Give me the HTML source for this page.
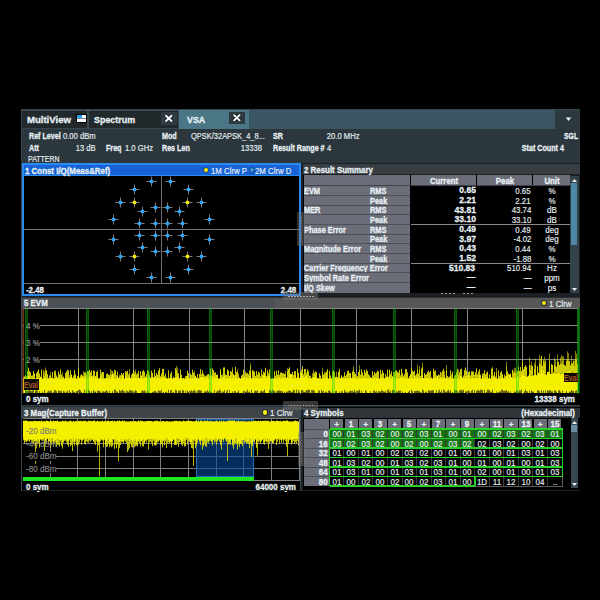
<!DOCTYPE html>
<html><head><meta charset="utf-8"><style>
html,body{margin:0;padding:0;background:#000;width:600px;height:600px;overflow:hidden}
.r{position:absolute}
.t{position:absolute;white-space:pre;font-family:"Liberation Sans", sans-serif;line-height:1;-webkit-text-stroke:0.15px currentColor}
.b{-webkit-text-stroke:0.3px currentColor}
</style></head><body>
<div class="r" style="left:21px;top:109px;width:558.5px;height:381.5px;background:#252c30;"></div><div class="r" style="left:21px;top:109px;width:558.5px;height:20px;background:#37474f;"></div><div class="r" style="left:179px;top:109.5px;width:376px;height:19.5px;background:#3b5663;"></div><div class="r" style="left:179px;top:109.5px;width:70px;height:19.5px;background:#4b7686;"></div><div class="r" style="left:555px;top:109.5px;width:24.5px;height:19.5px;background:#2c393f;"></div><div class="r" style="left:22px;top:111px;width:65.3px;height:16.8px;background:#22292d;"></div><div class="r" style="left:87.3px;top:109px;width:1.7px;height:20px;background:#3a4a52;"></div><div class="r" style="left:89px;top:111px;width:89.3px;height:16.8px;background:#22292d;"></div><div class="t b" style="left:26.9px;transform-origin:0 0;top:115.11px;font-size:9.6px;font-weight:bold;color:#e8f0f4;transform:scaleX(1.0);">MultiView</div><div class="r" style="left:76px;top:114px;width:11px;height:9px;background:#000;"></div><div class="r" style="left:77px;top:115px;width:9px;height:7px;background:#f4f6f8;"></div><div class="r" style="left:77px;top:115px;width:5px;height:3px;background:#2aa0f0;"></div><div class="r" style="left:77px;top:118px;width:9px;height:0.5px;background:#808890;"></div><div class="t b" style="left:94px;transform-origin:0 0;top:115.11px;font-size:9.6px;font-weight:bold;color:#e8f0f4;transform:scaleX(0.93);">Spectrum</div><div class="r" style="left:160.7px;top:112.4px;width:16.3px;height:12.6px;background:#2e3c42;"></div><svg class="r" style="left:0;top:0" width="600" height="600"><path d="M165.5 115.2L172 121.5M172 115.2L165.5 121.5" stroke="#000" stroke-opacity="0.6" stroke-width="3.2"/><path d="M165.5 115.2L172 121.5M172 115.2L165.5 121.5" stroke="#fff" stroke-width="1.9"/></svg><div class="t b" style="left:186.5px;transform-origin:0 0;top:115.11px;font-size:9.6px;font-weight:bold;color:#e8f0f4;transform:scaleX(0.92);">VSA</div><div class="r" style="left:229px;top:112px;width:15.7px;height:11.6px;background:#2c3a40;"></div><svg class="r" style="left:0;top:0" width="600" height="600"><path d="M233.6 114.6L240.1 120.9M240.1 114.6L233.6 120.9" stroke="#000" stroke-opacity="0.6" stroke-width="3.2"/><path d="M233.6 114.6L240.1 120.9M240.1 114.6L233.6 120.9" stroke="#fff" stroke-width="1.9"/></svg><svg class="r" style="left:565px;top:116.5px" width="7" height="5"><path d="M0.8 0.5 L6.2 0.5 L3.5 4 Z" fill="#f4f4f4"/></svg><div class="r" style="left:21px;top:129px;width:558.5px;height:34px;background:#2b373d;"></div><div class="t b" style="left:29.2px;transform-origin:0 0;top:132.09px;font-size:8.3px;font-weight:bold;color:#e8f0f4;transform:scaleX(0.86);">Ref Level</div><div class="t" style="left:63.3px;transform-origin:0 0;top:132.09px;font-size:8.3px;font-weight:normal;color:#e8f0f4;transform:scaleX(0.92);">0.00 dBm</div><div class="t b" style="left:161.7px;transform-origin:0 0;top:132.09px;font-size:8.3px;font-weight:bold;color:#e8f0f4;transform:scaleX(0.86);">Mod</div><div class="t" style="left:190.7px;transform-origin:0 0;top:132.09px;font-size:8.3px;font-weight:normal;color:#e8f0f4;transform:scaleX(0.9);">QPSK/32APSK_4_8...</div><div class="t b" style="left:272.7px;transform-origin:0 0;top:132.09px;font-size:8.3px;font-weight:bold;color:#e8f0f4;transform:scaleX(0.86);">SR</div><div class="t" style="right:240.5px;transform-origin:100% 0;top:132.09px;font-size:8.3px;font-weight:normal;color:#e8f0f4;transform:scaleX(0.92);">20.0 MHz</div><div class="t b" style="right:21.700000000000045px;transform-origin:100% 0;top:132.09px;font-size:8.3px;font-weight:bold;color:#e8f0f4;transform:scaleX(0.82);">SGL</div><div class="t b" style="left:29.2px;transform-origin:0 0;top:144.19px;font-size:8.3px;font-weight:bold;color:#e8f0f4;transform:scaleX(0.86);">Att</div><div class="t" style="right:504.7px;transform-origin:100% 0;top:144.19px;font-size:8.3px;font-weight:normal;color:#e8f0f4;transform:scaleX(0.92);">13 dB</div><div class="t b" style="left:105.75px;transform-origin:0 0;top:144.19px;font-size:8.3px;font-weight:bold;color:#e8f0f4;transform:scaleX(0.86);">Freq</div><div class="t" style="left:125px;transform-origin:0 0;top:144.19px;font-size:8.3px;font-weight:normal;color:#e8f0f4;transform:scaleX(0.92);">1.0 GHz</div><div class="t b" style="left:161.7px;transform-origin:0 0;top:144.19px;font-size:8.3px;font-weight:bold;color:#e8f0f4;transform:scaleX(0.86);">Res Len</div><div class="t" style="right:338.3px;transform-origin:100% 0;top:144.19px;font-size:8.3px;font-weight:normal;color:#e8f0f4;transform:scaleX(0.92);">13338</div><div class="t b" style="left:272.7px;transform-origin:0 0;top:144.19px;font-size:8.3px;font-weight:bold;color:#e8f0f4;transform:scaleX(0.86);">Result Range #</div><div class="t" style="left:326.7px;transform-origin:0 0;top:144.19px;font-size:8.3px;font-weight:normal;color:#e8f0f4;transform:scaleX(0.92);">4</div><div class="t b" style="right:36.299999999999955px;transform-origin:100% 0;top:144.19px;font-size:8.3px;font-weight:bold;color:#e8f0f4;transform:scaleX(0.86);">Stat Count 4</div><div class="t" style="left:28px;transform-origin:0 0;top:155.19px;font-size:8.3px;font-weight:normal;color:#e8f0f4;transform:scaleX(0.84);">PATTERN</div><div class="r" style="left:22px;top:163px;width:279px;height:132.5px;background:#2a8cf0;"></div><div class="r" style="left:23.5px;top:165px;width:275.5px;height:9.5px;background:#1762d6;"></div><div class="r" style="left:23.5px;top:175.5px;width:275.5px;height:118.5px;background:#000;"></div><div class="t b" style="left:24.7px;transform-origin:0 0;top:166.93px;font-size:8.7px;font-weight:bold;color:#e8f0f4;transform:scaleX(0.91);">1 Const I/Q(Meas&amp;Ref)</div><div class="r" style="left:204.3px;top:167.6px;width:4px;height:4px;border-radius:50%;background:#f8f000;box-shadow:0 0 0 0.6px #203060"></div><div class="t" style="left:210.8px;transform-origin:0 0;top:166.93px;font-size:8.7px;font-weight:normal;color:#e8f0f4;transform:scaleX(0.9);">1M Clrw P</div><div class="r" style="left:249.5px;top:167.6px;width:4px;height:4px;border-radius:50%;background:#3aa0d8;box-shadow:0 0 0 0.6px #203060"></div><div class="t" style="left:255.4px;transform-origin:0 0;top:166.93px;font-size:8.7px;font-weight:normal;color:#e8f0f4;transform:scaleX(0.9);">2M Clrw D</div><div class="r" style="left:23.5px;top:229px;width:275.5px;height:1px;background:#707070;"></div><div class="r" style="left:161px;top:175.5px;width:1px;height:108px;background:#707070;"></div><div class="r" style="left:23.5px;top:283px;width:275.5px;height:1px;background:#707070;"></div><div class="t b" style="left:26px;transform-origin:0 0;top:285.99px;font-size:8.3px;font-weight:bold;color:#e8f0f4;transform:scaleX(0.95);">-2.48</div><div class="t b" style="right:303.7px;transform-origin:100% 0;top:285.99px;font-size:8.3px;font-weight:bold;color:#e8f0f4;transform:scaleX(0.95);">2.48</div><svg class="r" style="left:0;top:0" width="600" height="600"><path d="M146.5 181.5H156.5M151.5 176.5V186.5" stroke="#7a7a7a" stroke-width="1"/><path d="M129.5 189.5H139.5M134.5 184.5V194.5" stroke="#7a7a7a" stroke-width="1"/><path d="M115.5 202.5H125.5M120.5 197.5V207.5" stroke="#7a7a7a" stroke-width="1"/><path d="M108.5 219.5H118.5M113.5 214.5V224.5" stroke="#7a7a7a" stroke-width="1"/><path d="M150.5 207.5H160.5M155.5 202.5V212.5" stroke="#7a7a7a" stroke-width="1"/><path d="M137.5 211.5H147.5M142.5 206.5V216.5" stroke="#7a7a7a" stroke-width="1"/><path d="M134.5 223.5H144.5M139.5 218.5V228.5" stroke="#7a7a7a" stroke-width="1"/><path d="M150.5 223.5H160.5M155.5 218.5V228.5" stroke="#7a7a7a" stroke-width="1"/><path d="M129.5 202.5H139.5M134.5 197.5V207.5" stroke="#7a7a7a" stroke-width="1"/><path d="M146.5 277.5H156.5M151.5 272.5V282.5" stroke="#7a7a7a" stroke-width="1"/><path d="M129.5 269.5H139.5M134.5 264.5V274.5" stroke="#7a7a7a" stroke-width="1"/><path d="M115.5 256.5H125.5M120.5 251.5V261.5" stroke="#7a7a7a" stroke-width="1"/><path d="M108.5 239.5H118.5M113.5 234.5V244.5" stroke="#7a7a7a" stroke-width="1"/><path d="M150.5 251.5H160.5M155.5 246.5V256.5" stroke="#7a7a7a" stroke-width="1"/><path d="M137.5 247.5H147.5M142.5 242.5V252.5" stroke="#7a7a7a" stroke-width="1"/><path d="M134.5 235.5H144.5M139.5 230.5V240.5" stroke="#7a7a7a" stroke-width="1"/><path d="M150.5 235.5H160.5M155.5 230.5V240.5" stroke="#7a7a7a" stroke-width="1"/><path d="M129.5 256.5H139.5M134.5 251.5V261.5" stroke="#7a7a7a" stroke-width="1"/><path d="M165.5 181.5H175.5M170.5 176.5V186.5" stroke="#7a7a7a" stroke-width="1"/><path d="M183.5 189.5H193.5M188.5 184.5V194.5" stroke="#7a7a7a" stroke-width="1"/><path d="M196.5 202.5H206.5M201.5 197.5V207.5" stroke="#7a7a7a" stroke-width="1"/><path d="M204.5 219.5H214.5M209.5 214.5V224.5" stroke="#7a7a7a" stroke-width="1"/><path d="M162.5 207.5H172.5M167.5 202.5V212.5" stroke="#7a7a7a" stroke-width="1"/><path d="M174.5 211.5H184.5M179.5 206.5V216.5" stroke="#7a7a7a" stroke-width="1"/><path d="M177.5 223.5H187.5M182.5 218.5V228.5" stroke="#7a7a7a" stroke-width="1"/><path d="M162.5 223.5H172.5M167.5 218.5V228.5" stroke="#7a7a7a" stroke-width="1"/><path d="M182.5 202.5H192.5M187.5 197.5V207.5" stroke="#7a7a7a" stroke-width="1"/><path d="M165.5 277.5H175.5M170.5 272.5V282.5" stroke="#7a7a7a" stroke-width="1"/><path d="M183.5 269.5H193.5M188.5 264.5V274.5" stroke="#7a7a7a" stroke-width="1"/><path d="M196.5 256.5H206.5M201.5 251.5V261.5" stroke="#7a7a7a" stroke-width="1"/><path d="M204.5 239.5H214.5M209.5 234.5V244.5" stroke="#7a7a7a" stroke-width="1"/><path d="M162.5 251.5H172.5M167.5 246.5V256.5" stroke="#7a7a7a" stroke-width="1"/><path d="M174.5 247.5H184.5M179.5 242.5V252.5" stroke="#7a7a7a" stroke-width="1"/><path d="M177.5 235.5H187.5M182.5 230.5V240.5" stroke="#7a7a7a" stroke-width="1"/><path d="M162.5 235.5H172.5M167.5 230.5V240.5" stroke="#7a7a7a" stroke-width="1"/><path d="M182.5 256.5H192.5M187.5 251.5V261.5" stroke="#7a7a7a" stroke-width="1"/><rect x="149.7" y="179.7" width="3.6" height="3.6" rx="1.2" fill="#2aa8ff"/><rect x="132.7" y="187.7" width="3.6" height="3.6" rx="1.2" fill="#2aa8ff"/><rect x="118.7" y="200.7" width="3.6" height="3.6" rx="1.2" fill="#2aa8ff"/><rect x="111.7" y="217.7" width="3.6" height="3.6" rx="1.2" fill="#2aa8ff"/><rect x="153.7" y="205.7" width="3.6" height="3.6" rx="1.2" fill="#2aa8ff"/><rect x="140.7" y="209.7" width="3.6" height="3.6" rx="1.2" fill="#2aa8ff"/><rect x="137.7" y="221.7" width="3.6" height="3.6" rx="1.2" fill="#2aa8ff"/><rect x="153.7" y="221.7" width="3.6" height="3.6" rx="1.2" fill="#2aa8ff"/><rect x="132.7" y="200.7" width="3.6" height="3.6" rx="1.2" fill="#f4ec00"/><rect x="149.7" y="275.7" width="3.6" height="3.6" rx="1.2" fill="#2aa8ff"/><rect x="132.7" y="267.7" width="3.6" height="3.6" rx="1.2" fill="#2aa8ff"/><rect x="118.7" y="254.7" width="3.6" height="3.6" rx="1.2" fill="#2aa8ff"/><rect x="111.7" y="237.7" width="3.6" height="3.6" rx="1.2" fill="#2aa8ff"/><rect x="153.7" y="249.7" width="3.6" height="3.6" rx="1.2" fill="#2aa8ff"/><rect x="140.7" y="245.7" width="3.6" height="3.6" rx="1.2" fill="#2aa8ff"/><rect x="137.7" y="233.7" width="3.6" height="3.6" rx="1.2" fill="#2aa8ff"/><rect x="153.7" y="233.7" width="3.6" height="3.6" rx="1.2" fill="#2aa8ff"/><rect x="132.7" y="254.7" width="3.6" height="3.6" rx="1.2" fill="#f4ec00"/><rect x="168.7" y="179.7" width="3.6" height="3.6" rx="1.2" fill="#2aa8ff"/><rect x="186.7" y="187.7" width="3.6" height="3.6" rx="1.2" fill="#2aa8ff"/><rect x="199.7" y="200.7" width="3.6" height="3.6" rx="1.2" fill="#2aa8ff"/><rect x="207.7" y="217.7" width="3.6" height="3.6" rx="1.2" fill="#2aa8ff"/><rect x="165.7" y="205.7" width="3.6" height="3.6" rx="1.2" fill="#2aa8ff"/><rect x="177.7" y="209.7" width="3.6" height="3.6" rx="1.2" fill="#2aa8ff"/><rect x="180.7" y="221.7" width="3.6" height="3.6" rx="1.2" fill="#2aa8ff"/><rect x="165.7" y="221.7" width="3.6" height="3.6" rx="1.2" fill="#2aa8ff"/><rect x="185.7" y="200.7" width="3.6" height="3.6" rx="1.2" fill="#f4ec00"/><rect x="168.7" y="275.7" width="3.6" height="3.6" rx="1.2" fill="#2aa8ff"/><rect x="186.7" y="267.7" width="3.6" height="3.6" rx="1.2" fill="#2aa8ff"/><rect x="199.7" y="254.7" width="3.6" height="3.6" rx="1.2" fill="#2aa8ff"/><rect x="207.7" y="237.7" width="3.6" height="3.6" rx="1.2" fill="#2aa8ff"/><rect x="165.7" y="249.7" width="3.6" height="3.6" rx="1.2" fill="#2aa8ff"/><rect x="177.7" y="245.7" width="3.6" height="3.6" rx="1.2" fill="#2aa8ff"/><rect x="180.7" y="233.7" width="3.6" height="3.6" rx="1.2" fill="#2aa8ff"/><rect x="165.7" y="233.7" width="3.6" height="3.6" rx="1.2" fill="#2aa8ff"/><rect x="185.7" y="254.7" width="3.6" height="3.6" rx="1.2" fill="#f4ec00"/></svg><div class="r" style="left:301px;top:163px;width:278.5px;height:132.5px;background:#1c2024;"></div><div class="r" style="left:302.5px;top:163.7px;width:277px;height:10.5px;background:#383e42;"></div><div class="t b" style="left:303.8px;transform-origin:0 0;top:165.63px;font-size:8.7px;font-weight:bold;color:#e8f0f4;transform:scaleX(0.91);">2 Result Summary</div><div class="r" style="left:302.5px;top:175px;width:267.5px;height:118px;background:#000;"></div><div class="r" style="left:303.8px;top:175.4px;width:106.2px;height:117.2px;background:#6b6d78;"></div><div class="r" style="left:411px;top:175.4px;width:65px;height:9.7px;background:#6b6d78;"></div><div class="r" style="left:477px;top:175.4px;width:55.4px;height:9.7px;background:#6b6d78;"></div><div class="r" style="left:533px;top:175.4px;width:37px;height:9.7px;background:#6b6d78;"></div><div class="r" style="left:303.8px;top:185px;width:266px;height:1.3px;background:#3e434b;"></div><div class="t b" style="left:443.5px;transform-origin:50% 0;top:176.91px;font-size:8.5px;font-weight:bold;color:#e8f0f4;transform:translateX(-50%) scaleX(0.92);">Current</div><div class="t b" style="left:504.7px;transform-origin:50% 0;top:176.91px;font-size:8.5px;font-weight:bold;color:#e8f0f4;transform:translateX(-50%) scaleX(0.92);">Peak</div><div class="t b" style="left:551.5px;transform-origin:50% 0;top:176.91px;font-size:8.5px;font-weight:bold;color:#e8f0f4;transform:translateX(-50%) scaleX(0.92);">Unit</div><div class="t b" style="left:304.3px;transform-origin:0 0;top:187.01px;font-size:8.5px;font-weight:bold;color:#e8f0f4;transform:scaleX(0.87);">EVM</div><div class="t b" style="left:370px;transform-origin:0 0;top:187.01px;font-size:8.5px;font-weight:bold;color:#e8f0f4;transform:scaleX(0.87);">RMS</div><div class="t b" style="right:124.5px;transform-origin:100% 0;top:186.47px;font-size:9.2px;font-weight:bold;color:#e8f0f4;transform:scaleX(0.93);">0.65</div><div class="t" style="right:69px;transform-origin:100% 0;top:187.01px;font-size:8.5px;font-weight:normal;color:#e8f0f4;transform:scaleX(0.92);">0.65</div><div class="t" style="left:551.5px;transform-origin:50% 0;top:187.01px;font-size:8.5px;font-weight:normal;color:#e8f0f4;transform:translateX(-50%) scaleX(0.94);">%</div><div class="r" style="left:303.8px;top:194.95000000000002px;width:106.2px;height:1px;background:#4c5059;"></div><div class="t b" style="left:304.3px;transform-origin:0 0;top:196.66px;font-size:8.5px;font-weight:bold;color:#e8f0f4;transform:scaleX(0.87);"></div><div class="t b" style="left:370px;transform-origin:0 0;top:196.66px;font-size:8.5px;font-weight:bold;color:#e8f0f4;transform:scaleX(0.87);">Peak</div><div class="t b" style="right:124.5px;transform-origin:100% 0;top:196.12px;font-size:9.2px;font-weight:bold;color:#e8f0f4;transform:scaleX(0.93);">2.21</div><div class="t" style="right:69px;transform-origin:100% 0;top:196.66px;font-size:8.5px;font-weight:normal;color:#e8f0f4;transform:scaleX(0.92);">2.21</div><div class="t" style="left:551.5px;transform-origin:50% 0;top:196.66px;font-size:8.5px;font-weight:normal;color:#e8f0f4;transform:translateX(-50%) scaleX(0.94);">%</div><div class="r" style="left:303.8px;top:204.60000000000002px;width:106.2px;height:1px;background:#4c5059;"></div><div class="t b" style="left:304.3px;transform-origin:0 0;top:206.31px;font-size:8.5px;font-weight:bold;color:#e8f0f4;transform:scaleX(0.87);">MER</div><div class="t b" style="left:370px;transform-origin:0 0;top:206.31px;font-size:8.5px;font-weight:bold;color:#e8f0f4;transform:scaleX(0.87);">RMS</div><div class="t b" style="right:124.5px;transform-origin:100% 0;top:205.77px;font-size:9.2px;font-weight:bold;color:#e8f0f4;transform:scaleX(0.93);">43.81</div><div class="t" style="right:69px;transform-origin:100% 0;top:206.31px;font-size:8.5px;font-weight:normal;color:#e8f0f4;transform:scaleX(0.92);">43.74</div><div class="t" style="left:551.5px;transform-origin:50% 0;top:206.31px;font-size:8.5px;font-weight:normal;color:#e8f0f4;transform:translateX(-50%) scaleX(0.94);">dB</div><div class="r" style="left:303.8px;top:214.25px;width:106.2px;height:1px;background:#4c5059;"></div><div class="t b" style="left:304.3px;transform-origin:0 0;top:215.96px;font-size:8.5px;font-weight:bold;color:#e8f0f4;transform:scaleX(0.87);"></div><div class="t b" style="left:370px;transform-origin:0 0;top:215.96px;font-size:8.5px;font-weight:bold;color:#e8f0f4;transform:scaleX(0.87);">Peak</div><div class="t b" style="right:124.5px;transform-origin:100% 0;top:215.42px;font-size:9.2px;font-weight:bold;color:#e8f0f4;transform:scaleX(0.93);">33.10</div><div class="t" style="right:69px;transform-origin:100% 0;top:215.96px;font-size:8.5px;font-weight:normal;color:#e8f0f4;transform:scaleX(0.92);">33.10</div><div class="t" style="left:551.5px;transform-origin:50% 0;top:215.96px;font-size:8.5px;font-weight:normal;color:#e8f0f4;transform:translateX(-50%) scaleX(0.94);">dB</div><div class="r" style="left:303.8px;top:223.9px;width:106.2px;height:1px;background:#4c5059;"></div><div class="t b" style="left:304.3px;transform-origin:0 0;top:225.61px;font-size:8.5px;font-weight:bold;color:#e8f0f4;transform:scaleX(0.87);">Phase Error</div><div class="t b" style="left:370px;transform-origin:0 0;top:225.61px;font-size:8.5px;font-weight:bold;color:#e8f0f4;transform:scaleX(0.87);">RMS</div><div class="t b" style="right:124.5px;transform-origin:100% 0;top:225.07px;font-size:9.2px;font-weight:bold;color:#e8f0f4;transform:scaleX(0.93);">0.49</div><div class="t" style="right:69px;transform-origin:100% 0;top:225.61px;font-size:8.5px;font-weight:normal;color:#e8f0f4;transform:scaleX(0.92);">0.49</div><div class="t" style="left:551.5px;transform-origin:50% 0;top:225.61px;font-size:8.5px;font-weight:normal;color:#e8f0f4;transform:translateX(-50%) scaleX(0.94);">deg</div><div class="r" style="left:303.8px;top:233.55px;width:106.2px;height:1px;background:#4c5059;"></div><div class="t b" style="left:304.3px;transform-origin:0 0;top:235.26px;font-size:8.5px;font-weight:bold;color:#e8f0f4;transform:scaleX(0.87);"></div><div class="t b" style="left:370px;transform-origin:0 0;top:235.26px;font-size:8.5px;font-weight:bold;color:#e8f0f4;transform:scaleX(0.87);">Peak</div><div class="t b" style="right:124.5px;transform-origin:100% 0;top:234.72px;font-size:9.2px;font-weight:bold;color:#e8f0f4;transform:scaleX(0.93);">3.97</div><div class="t" style="right:69px;transform-origin:100% 0;top:235.26px;font-size:8.5px;font-weight:normal;color:#e8f0f4;transform:scaleX(0.92);">-4.02</div><div class="t" style="left:551.5px;transform-origin:50% 0;top:235.26px;font-size:8.5px;font-weight:normal;color:#e8f0f4;transform:translateX(-50%) scaleX(0.94);">deg</div><div class="r" style="left:303.8px;top:243.20000000000002px;width:106.2px;height:1px;background:#4c5059;"></div><div class="t b" style="left:304.3px;transform-origin:0 0;top:244.91px;font-size:8.5px;font-weight:bold;color:#e8f0f4;transform:scaleX(0.87);">Magnitude Error</div><div class="t b" style="left:370px;transform-origin:0 0;top:244.91px;font-size:8.5px;font-weight:bold;color:#e8f0f4;transform:scaleX(0.87);">RMS</div><div class="t b" style="right:124.5px;transform-origin:100% 0;top:244.37px;font-size:9.2px;font-weight:bold;color:#e8f0f4;transform:scaleX(0.93);">0.43</div><div class="t" style="right:69px;transform-origin:100% 0;top:244.91px;font-size:8.5px;font-weight:normal;color:#e8f0f4;transform:scaleX(0.92);">0.44</div><div class="t" style="left:551.5px;transform-origin:50% 0;top:244.91px;font-size:8.5px;font-weight:normal;color:#e8f0f4;transform:translateX(-50%) scaleX(0.94);">%</div><div class="r" style="left:303.8px;top:252.85000000000002px;width:106.2px;height:1px;background:#4c5059;"></div><div class="t b" style="left:304.3px;transform-origin:0 0;top:254.56px;font-size:8.5px;font-weight:bold;color:#e8f0f4;transform:scaleX(0.87);"></div><div class="t b" style="left:370px;transform-origin:0 0;top:254.56px;font-size:8.5px;font-weight:bold;color:#e8f0f4;transform:scaleX(0.87);">Peak</div><div class="t b" style="right:124.5px;transform-origin:100% 0;top:254.02px;font-size:9.2px;font-weight:bold;color:#e8f0f4;transform:scaleX(0.93);">1.52</div><div class="t" style="right:69px;transform-origin:100% 0;top:254.56px;font-size:8.5px;font-weight:normal;color:#e8f0f4;transform:scaleX(0.92);">-1.88</div><div class="t" style="left:551.5px;transform-origin:50% 0;top:254.56px;font-size:8.5px;font-weight:normal;color:#e8f0f4;transform:translateX(-50%) scaleX(0.94);">%</div><div class="r" style="left:303.8px;top:262.5px;width:106.2px;height:1px;background:#4c5059;"></div><div class="t b" style="left:304.3px;transform-origin:0 0;top:264.21px;font-size:8.5px;font-weight:bold;color:#e8f0f4;transform:scaleX(0.87);">Carrier Frequency Error</div><div class="t b" style="left:370px;transform-origin:0 0;top:264.21px;font-size:8.5px;font-weight:bold;color:#e8f0f4;transform:scaleX(0.87);"></div><div class="t b" style="right:124.5px;transform-origin:100% 0;top:263.67px;font-size:9.2px;font-weight:bold;color:#e8f0f4;transform:scaleX(0.93);">510.83</div><div class="t" style="right:69px;transform-origin:100% 0;top:264.21px;font-size:8.5px;font-weight:normal;color:#e8f0f4;transform:scaleX(0.92);">510.94</div><div class="t" style="left:551.5px;transform-origin:50% 0;top:264.21px;font-size:8.5px;font-weight:normal;color:#e8f0f4;transform:translateX(-50%) scaleX(0.94);">Hz</div><div class="r" style="left:303.8px;top:272.15000000000003px;width:106.2px;height:1px;background:#4c5059;"></div><div class="t b" style="left:304.3px;transform-origin:0 0;top:273.86px;font-size:8.5px;font-weight:bold;color:#e8f0f4;transform:scaleX(0.87);">Symbol Rate Error</div><div class="t b" style="left:370px;transform-origin:0 0;top:273.86px;font-size:8.5px;font-weight:bold;color:#e8f0f4;transform:scaleX(0.87);"></div><div class="t b" style="right:124.5px;transform-origin:100% 0;top:273.32px;font-size:9.2px;font-weight:bold;color:#e8f0f4;transform:scaleX(0.93);">&#8212;</div><div class="t" style="right:69px;transform-origin:100% 0;top:273.86px;font-size:8.5px;font-weight:normal;color:#e8f0f4;transform:scaleX(0.92);">&#8212;</div><div class="t" style="left:551.5px;transform-origin:50% 0;top:273.86px;font-size:8.5px;font-weight:normal;color:#e8f0f4;transform:translateX(-50%) scaleX(0.94);">ppm</div><div class="r" style="left:303.8px;top:281.8px;width:106.2px;height:1px;background:#4c5059;"></div><div class="t b" style="left:304.3px;transform-origin:0 0;top:283.51px;font-size:8.5px;font-weight:bold;color:#e8f0f4;transform:scaleX(0.87);">I/Q Skew</div><div class="t b" style="left:370px;transform-origin:0 0;top:283.51px;font-size:8.5px;font-weight:bold;color:#e8f0f4;transform:scaleX(0.87);"></div><div class="t b" style="right:124.5px;transform-origin:100% 0;top:282.97px;font-size:9.2px;font-weight:bold;color:#e8f0f4;transform:scaleX(0.93);">&#8212;</div><div class="t" style="right:69px;transform-origin:100% 0;top:283.51px;font-size:8.5px;font-weight:normal;color:#e8f0f4;transform:scaleX(0.92);">&#8212;</div><div class="t" style="left:551.5px;transform-origin:50% 0;top:283.51px;font-size:8.5px;font-weight:normal;color:#e8f0f4;transform:translateX(-50%) scaleX(0.94);">ps</div><div class="r" style="left:411px;top:223.5px;width:159px;height:1px;background:#8a8a8a;"></div><div class="r" style="left:411px;top:262.5px;width:159px;height:1px;background:#8a8a8a;"></div><div class="r" style="left:441px;top:292.5px;width:2px;height:1px;background:#9a9a9a;"></div><div class="r" style="left:445px;top:292.5px;width:2px;height:1px;background:#9a9a9a;"></div><div class="r" style="left:449px;top:292.5px;width:2px;height:1px;background:#9a9a9a;"></div><div class="r" style="left:453px;top:292.5px;width:2px;height:1px;background:#9a9a9a;"></div><div class="r" style="left:463px;top:292.5px;width:2px;height:1px;background:#9a9a9a;"></div><div class="r" style="left:467px;top:292.5px;width:2px;height:1px;background:#9a9a9a;"></div><div class="r" style="left:471px;top:292.5px;width:2px;height:1px;background:#9a9a9a;"></div><div class="r" style="left:570px;top:176px;width:8.5px;height:117px;background:#33424a;"></div><div class="r" style="left:571.3px;top:182.5px;width:5.6px;height:62.5px;background:#4f87a6;"></div><svg class="r" style="left:571px;top:177.5px" width="7" height="5"><path d="M1 4 L6 4 L3.5 1 Z" fill="#f0f0f0"/></svg><svg class="r" style="left:571px;top:286.5px" width="7" height="5"><path d="M1 1 L6 1 L3.5 4 Z" fill="#f0f0f0"/></svg><div class="r" style="left:21px;top:295.5px;width:558.5px;height:2px;background:#1a1f22;"></div><div class="r" style="left:22px;top:297.5px;width:557.5px;height:108px;background:#000;"></div><div class="r" style="left:22px;top:297.5px;width:557.5px;height:10.8px;background:#575757;"></div><div class="r" style="left:22px;top:297.5px;width:253px;height:10.8px;background:#4b5155;"></div><div class="r" style="left:22px;top:297.3px;width:557.5px;height:0.8px;background:#2a3034;"></div><div class="t b" style="left:24px;transform-origin:0 0;top:299.33px;font-size:8.7px;font-weight:bold;color:#e8f0f4;transform:scaleX(0.91);">5 EVM</div><div class="r" style="left:541.5px;top:300.7px;width:4.5px;height:4.5px;border-radius:50%;background:#f8f000;box-shadow:0 0 0 0.8px #182040"></div><div class="t" style="right:28.700000000000045px;transform-origin:100% 0;top:299.63px;font-size:8.7px;font-weight:normal;color:#e8f0f4;transform:scaleX(0.92);">1 Clrw</div><div class="r" style="left:21px;top:405.3px;width:558.5px;height:1.2px;background:#37474f;"></div><div class="r" style="left:21px;top:109px;width:1.2px;height:381.5px;background:#37474f;"></div><svg class="r" style="left:0;top:0" width="600" height="600" shape-rendering="crispEdges"><path d="M22.5 308.5H578.5" stroke="#858585" stroke-width="1"/><path d="M22.5 325.5H578.5" stroke="#858585" stroke-width="1"/><path d="M22.5 342.5H578.5" stroke="#858585" stroke-width="1"/><path d="M22.5 359.5H578.5" stroke="#858585" stroke-width="1"/><path d="M78.5 308.3V393.5" stroke="#858585" stroke-width="1"/><path d="M133.5 308.3V393.5" stroke="#858585" stroke-width="1"/><path d="M189.5 308.3V393.5" stroke="#858585" stroke-width="1"/><path d="M244.5 308.3V393.5" stroke="#858585" stroke-width="1"/><path d="M300.5 308.3V393.5" stroke="#858585" stroke-width="1"/><path d="M356.5 308.3V393.5" stroke="#858585" stroke-width="1"/><path d="M411.5 308.3V393.5" stroke="#858585" stroke-width="1"/><path d="M467.5 308.3V393.5" stroke="#858585" stroke-width="1"/><path d="M522.5 308.3V393.5" stroke="#858585" stroke-width="1"/></svg><div class="r" style="left:23.5px;top:321.5px;width:16px;height:8px;background:#000;"></div><div class="t" style="left:26px;transform-origin:0 0;top:321.83px;font-size:8.7px;font-weight:normal;color:#9c9c9c;transform:scaleX(0.92);">4 %</div><div class="r" style="left:23.5px;top:338.5px;width:16px;height:8px;background:#000;"></div><div class="t" style="left:26px;transform-origin:0 0;top:338.83px;font-size:8.7px;font-weight:normal;color:#9c9c9c;transform:scaleX(0.92);">3 %</div><div class="r" style="left:23.5px;top:355.5px;width:16px;height:8px;background:#000;"></div><div class="t" style="left:26px;transform-origin:0 0;top:355.83px;font-size:8.7px;font-weight:normal;color:#9c9c9c;transform:scaleX(0.92);">2 %</div><svg class="r" style="left:0;top:0" width="600" height="600"><path d="M23.5 393V378.9M24.5 393V378.4M25.5 393V377.2M26.5 393V379.0M27.5 393V375.8M28.5 393V375.7M29.5 393V378.8M30.5 393V378.6M31.5 393V378.7M32.5 393V379.3M33.5 393V377.7M34.5 393V379.0M35.5 393V379.3M36.5 393V377.7M37.5 393V378.0M38.5 393V377.4M39.5 393V378.5M40.5 393V376.7M41.5 393V376.3M42.5 393V379.0M43.5 393V378.7M44.5 393V377.9M45.5 393V378.4M46.5 393V378.3M47.5 393V378.3M48.5 393V378.2M49.5 393V378.7M50.5 393V378.4M51.5 393V377.6M52.5 393V377.4M53.5 393V379.2M54.5 393V378.8M55.5 393V377.8M56.5 393V378.1M57.5 393V379.5M58.5 393V379.5M59.5 393V378.5M60.5 393V378.2M61.5 393V378.6M62.5 393V379.4M63.5 393V378.3M64.5 393V379.3M65.5 393V377.3M66.5 393V376.9M67.5 393V378.7M68.5 393V378.1M69.5 393V379.1M70.5 393V376.9M71.5 393V374.6M72.5 393V377.8M73.5 393V378.5M74.5 393V378.3M75.5 393V376.3M76.5 393V379.1M77.5 393V378.8M78.5 393V375.9M79.5 393V377.7M80.5 393V378.1M81.5 393V376.7M82.5 393V375.6M83.5 393V378.4M84.5 393V377.8M85.5 393V375.4M86.5 393V377.7M87.5 393V379.4M88.5 393V377.2M89.5 393V375.2M90.5 393V377.1M91.5 393V375.6M92.5 393V379.4M93.5 393V375.9M94.5 393V378.2M95.5 393V376.1M96.5 393V378.1M97.5 393V376.1M98.5 393V379.2M99.5 393V378.1M100.5 393V375.2M101.5 393V378.9M102.5 393V378.5M103.5 393V378.5M104.5 393V378.7M105.5 393V378.0M106.5 393V379.2M107.5 393V378.9M108.5 393V378.4M109.5 393V376.7M110.5 393V379.2M111.5 393V378.1M112.5 393V373.8M113.5 393V376.0M114.5 393V377.4M115.5 393V378.6M116.5 393V377.4M117.5 393V375.5M118.5 393V377.7M119.5 393V379.4M120.5 393V378.3M121.5 393V378.2M122.5 393V376.0M123.5 393V375.9M124.5 393V379.2M125.5 393V376.3M126.5 393V377.0M127.5 393V377.5M128.5 393V379.3M129.5 393V376.2M130.5 393V377.9M131.5 393V378.6M132.5 393V377.9M133.5 393V373.8M134.5 393V378.1M135.5 393V376.9M136.5 393V379.1M137.5 393V379.0M138.5 393V378.0M139.5 393V378.0M140.5 393V378.2M141.5 393V375.5M142.5 393V378.4M143.5 393V377.8M144.5 393V377.4M145.5 393V378.1M146.5 393V376.4M147.5 393V376.6M148.5 393V378.4M149.5 393V376.8M150.5 393V379.4M151.5 393V379.3M152.5 393V378.0M153.5 393V379.2M154.5 393V376.5M155.5 393V379.2M156.5 393V379.4M157.5 393V377.1M158.5 393V379.2M159.5 393V377.1M160.5 393V379.2M161.5 393V378.8M162.5 393V376.7M163.5 393V376.9M164.5 393V377.3M165.5 393V377.7M166.5 393V378.9M167.5 393V378.9M168.5 393V378.6M169.5 393V378.0M170.5 393V377.9M171.5 393V379.4M172.5 393V378.8M173.5 393V379.5M174.5 393V377.8M175.5 393V376.5M176.5 393V376.8M177.5 393V376.0M178.5 393V378.4M179.5 393V378.4M180.5 393V376.1M181.5 393V377.4M182.5 393V378.7M183.5 393V377.9M184.5 393V379.5M185.5 393V378.4M186.5 393V379.1M187.5 393V375.3M188.5 393V377.6M189.5 393V377.9M190.5 393V378.8M191.5 393V378.5M192.5 393V378.3M193.5 393V379.2M194.5 393V379.2M195.5 393V375.8M196.5 393V377.7M197.5 393V379.5M198.5 393V378.4M199.5 393V378.9M200.5 393V376.4M201.5 393V376.7M202.5 393V378.0M203.5 393V376.6M204.5 393V379.1M205.5 393V376.4M206.5 393V378.7M207.5 393V376.2M208.5 393V378.7M209.5 393V377.0M210.5 393V375.2M211.5 393V378.4M212.5 393V376.0M213.5 393V378.8M214.5 393V375.8M215.5 393V376.8M216.5 393V374.9M217.5 393V379.0M218.5 393V378.9M219.5 393V378.7M220.5 393V371.9M221.5 393V379.5M222.5 393V378.9M223.5 393V376.2M224.5 393V375.1M225.5 393V378.9M226.5 393V379.2M227.5 393V377.3M228.5 393V379.1M229.5 393V379.4M230.5 393V374.8M231.5 393V378.8M232.5 393V377.9M233.5 393V374.1M234.5 393V378.6M235.5 393V374.5M236.5 393V379.3M237.5 393V378.6M238.5 393V377.8M239.5 393V377.7M240.5 393V378.9M241.5 393V377.8M242.5 393V379.4M243.5 393V376.8M244.5 393V378.0M245.5 393V378.7M246.5 393V376.8M247.5 393V377.3M248.5 393V377.6M249.5 393V375.6M250.5 393V374.0M251.5 393V378.5M252.5 393V378.5M253.5 393V377.9M254.5 393V377.7M255.5 393V379.1M256.5 393V377.4M257.5 393V377.5M258.5 393V379.4M259.5 393V378.6M260.5 393V379.1M261.5 393V378.0M262.5 393V378.5M263.5 393V374.6M264.5 393V373.9M265.5 393V375.9M266.5 393V377.6M267.5 393V376.4M268.5 393V375.8M269.5 393V374.5M270.5 393V378.8M271.5 393V379.1M272.5 393V378.4M273.5 393V378.8M274.5 393V379.4M275.5 393V378.9M276.5 393V378.3M277.5 393V379.1M278.5 393V377.3M279.5 393V376.8M280.5 393V378.8M281.5 393V378.2M282.5 393V378.2M283.5 393V376.5M284.5 393V379.1M285.5 393V378.5M286.5 393V379.3M287.5 393V376.4M288.5 393V377.7M289.5 393V374.9M290.5 393V373.8M291.5 393V374.0M292.5 393V379.2M293.5 393V377.6M294.5 393V378.7M295.5 393V374.6M296.5 393V379.4M297.5 393V376.8M298.5 393V375.1M299.5 393V378.1M300.5 393V377.9M301.5 393V374.0M302.5 393V375.3M303.5 393V377.1M304.5 393V376.6M305.5 393V375.4M306.5 393V374.6M307.5 393V377.8M308.5 393V377.9M309.5 393V378.9M310.5 393V378.7M311.5 393V378.3M312.5 393V379.3M313.5 393V376.8M314.5 393V376.7M315.5 393V374.6M316.5 393V377.7M317.5 393V379.4M318.5 393V378.7M319.5 393V378.6M320.5 393V378.4M321.5 393V379.3M322.5 393V378.8M323.5 393V379.4M324.5 393V377.0M325.5 393V379.5M326.5 393V376.1M327.5 393V377.8M328.5 393V379.2M329.5 393V377.8M330.5 393V379.3M331.5 393V378.7M332.5 393V378.1M333.5 393V377.0M334.5 393V379.2M335.5 393V379.0M336.5 393V378.1M337.5 393V378.8M338.5 393V378.5M339.5 393V376.8M340.5 393V378.3M341.5 393V375.4M342.5 393V377.7M343.5 393V378.3M344.5 393V378.6M345.5 393V378.3M346.5 393V378.2M347.5 393V377.8M348.5 393V379.3M349.5 393V377.7M350.5 393V377.0M351.5 393V378.0M352.5 393V379.1M353.5 393V378.0M354.5 393V379.5M355.5 393V377.5M356.5 393V379.4M357.5 393V378.4M358.5 393V379.5M359.5 393V378.1M360.5 393V377.7M361.5 393V377.4M362.5 393V378.0M363.5 393V379.4M364.5 393V376.3M365.5 393V378.4M366.5 393V377.4M367.5 393V378.8M368.5 393V377.8M369.5 393V378.2M370.5 393V379.3M371.5 393V377.8M372.5 393V378.2M373.5 393V378.5M374.5 393V376.5M375.5 393V378.6M376.5 393V377.1M377.5 393V377.5M378.5 393V378.2M379.5 393V379.0M380.5 393V376.1M381.5 393V378.3M382.5 393V376.6M383.5 393V377.3M384.5 393V378.4M385.5 393V378.2M386.5 393V376.6M387.5 393V376.8M388.5 393V378.8M389.5 393V376.1M390.5 393V378.6M391.5 393V378.7M392.5 393V376.3M393.5 393V379.0M394.5 393V378.9M395.5 393V379.4M396.5 393V377.9M397.5 393V379.2M398.5 393V378.4M399.5 393V377.5M400.5 393V379.0M401.5 393V376.6M402.5 393V376.6M403.5 393V379.4M404.5 393V379.4M405.5 393V377.4M406.5 393V377.0M407.5 393V379.2M408.5 393V378.3M409.5 393V378.6M410.5 393V378.1M411.5 393V376.3M412.5 393V377.3M413.5 393V378.5M414.5 393V375.4M415.5 393V377.9M416.5 393V378.9M417.5 393V376.9M418.5 393V379.4M419.5 393V378.4M420.5 393V377.7M421.5 393V377.4M422.5 393V374.9M423.5 393V378.1M424.5 393V378.1M425.5 393V379.3M426.5 393V378.0M427.5 393V377.4M428.5 393V378.0M429.5 393V378.7M430.5 393V377.8M431.5 393V378.8M432.5 393V379.3M433.5 393V377.0M434.5 393V377.5M435.5 393V376.8M436.5 393V377.6M437.5 393V375.8M438.5 393V378.6M439.5 393V378.9M440.5 393V376.7M441.5 393V378.8M442.5 393V379.2M443.5 393V377.3M444.5 393V379.3M445.5 393V379.2M446.5 393V378.3M447.5 393V379.2M448.5 393V379.2M449.5 393V378.5M450.5 393V375.3M451.5 393V379.4M452.5 393V373.8M453.5 393V379.3M454.5 393V378.2M455.5 393V377.4M456.5 393V378.4M457.5 393V377.6M458.5 393V378.4M459.5 393V378.3M460.5 393V375.6M461.5 393V375.4M462.5 393V377.5M463.5 393V378.9M464.5 393V377.8M465.5 393V375.5M466.5 393V378.4M467.5 393V377.6M468.5 393V375.0M469.5 393V378.0M470.5 393V378.8M471.5 393V378.9M472.5 393V377.1M473.5 393V377.5M474.5 393V377.7M475.5 393V377.7M476.5 393V377.3M477.5 393V377.1M478.5 393V377.6M479.5 393V375.1M480.5 393V379.2M481.5 393V379.1M482.5 393V375.5M483.5 393V379.1M484.5 393V378.7M485.5 393V376.8M486.5 393V378.3M487.5 393V376.3M488.5 393V378.6M489.5 393V377.9M490.5 393V379.4M491.5 393V376.0M492.5 393V377.1M493.5 393V379.3M494.5 393V374.3M495.5 393V379.5M496.5 393V378.4M497.5 393V379.3M498.5 393V378.9M499.5 393V378.6M500.5 393V378.7M501.5 393V377.3M502.5 393V376.0M503.5 393V378.3M504.5 393V379.1M505.5 393V378.9M506.5 393V375.2M507.5 393V374.8M508.5 393V377.5M509.5 393V374.5M510.5 393V373.7M511.5 393V377.2M512.5 393V377.5M513.5 393V378.0M514.5 393V378.2M515.5 393V376.8M516.5 393V377.2M517.5 393V375.9M518.5 393V376.1M519.5 393V377.3M520.5 393V376.7M521.5 393V374.9M522.5 393V373.5M523.5 393V376.0M524.5 393V375.1M525.5 393V375.6M526.5 393V376.5M527.5 393V376.5M528.5 393V375.6M529.5 393V373.6M530.5 393V376.0M531.5 393V375.7M532.5 393V375.3M533.5 393V375.4M534.5 393V374.5M535.5 393V373.6M536.5 393V375.2M537.5 393V373.4M538.5 393V372.7M539.5 393V373.1M540.5 393V373.2M541.5 393V369.0M542.5 393V372.3M543.5 393V369.7M544.5 393V373.4M545.5 393V374.2M546.5 393V374.7M547.5 393V372.0M548.5 393V371.7M549.5 393V371.6M550.5 393V374.0M551.5 393V373.5M552.5 393V373.5M553.5 393V372.6M554.5 393V372.7M555.5 393V374.0M556.5 393V373.8M557.5 393V373.1M558.5 393V372.1M559.5 393V372.8M560.5 393V374.3M561.5 393V373.7M562.5 393V373.5M563.5 393V373.1M564.5 393V373.0M565.5 393V374.6M566.5 393V373.4M567.5 393V371.1M568.5 393V374.3M569.5 393V371.0M570.5 393V374.6M571.5 393V372.6M572.5 393V372.5M573.5 393V373.2M574.5 393V373.4M575.5 393V372.1M576.5 393V373.4M577.5 393V374.4" stroke="#f4f000" stroke-width="1"/><path d="M23.5 378.9V376.9M24.5 378.4V376.4M25.5 377.2V375.0M26.5 379.0V376.5M27.5 375.8V371.3M28.5 375.7V367.7M29.5 378.8V371.2M30.5 378.6V372.3M31.5 378.7V375.7M32.5 379.3V375.4M33.5 377.7V371.0M34.5 379.0V373.5M36.5 377.7V373.1M37.5 378.0V371.5M38.5 377.4V369.4M39.5 378.5V373.6M41.5 376.3V369.5M43.5 378.7V372.2M44.5 377.9V375.5M45.5 378.4V370.3M46.5 378.3V370.2M47.5 378.3V374.1M49.5 378.7V375.5M50.5 378.4V374.9M52.5 377.4V372.1M54.5 378.8V370.8M55.5 377.8V371.5M56.5 378.1V375.4M57.5 379.5V377.2M58.5 379.5V371.4M59.5 378.5V374.3M60.5 378.2V369.2M61.5 378.6V374.5M62.5 379.4V376.7M63.5 378.3V376.6M65.5 377.3V373.0M66.5 376.9V371.4M67.5 378.7V369.9M68.5 378.1V370.5M69.5 379.1V377.4M70.5 376.9V370.2M73.5 378.5V375.5M74.5 378.3V370.1M75.5 376.3V374.2M77.5 378.8V375.9M78.5 375.9V368.4M80.5 378.1V375.4M81.5 376.7V374.1M83.5 378.4V375.9M84.5 377.8V372.3M85.5 375.4V372.3M86.5 377.7V374.4M87.5 379.4V371.0M88.5 377.2V371.3M89.5 375.2V369.7M90.5 377.1V372.3M91.5 375.6V370.5M92.5 379.4V375.5M93.5 375.9V370.2M94.5 378.2V370.9M96.5 378.1V372.0M97.5 376.1V370.6M100.5 375.2V369.5M101.5 378.9V374.0M102.5 378.5V372.0M103.5 378.5V372.0M106.5 379.2V374.0M107.5 378.9V373.5M108.5 378.4V374.5M109.5 376.7V375.1M110.5 379.2V373.8M111.5 378.1V374.6M112.5 373.8V371.3M113.5 376.0V373.4M114.5 377.4V370.6M115.5 378.6V370.1M116.5 377.4V375.2M117.5 375.5V371.5M119.5 379.4V376.1M120.5 378.3V375.3M121.5 378.2V373.0M122.5 376.0V374.4M123.5 375.9V373.0M125.5 376.3V371.1M126.5 377.0V371.7M127.5 377.5V370.7M128.5 379.3V375.2M129.5 376.2V373.5M131.5 378.6V374.9M132.5 377.9V373.1M133.5 373.8V370.4M134.5 378.1V373.9M135.5 376.9V371.6M136.5 379.1V374.6M137.5 379.0V373.5M138.5 378.0V371.1M140.5 378.2V371.3M142.5 378.4V371.4M143.5 377.8V370.0M144.5 377.4V371.6M145.5 378.1V376.4M146.5 376.4V374.1M147.5 376.6V370.0M148.5 378.4V370.9M149.5 376.8V374.8M150.5 379.4V377.4M151.5 379.3V370.5M152.5 378.0V372.9M153.5 379.2V377.1M154.5 376.5V369.4M155.5 379.2V375.7M156.5 379.4V372.8M157.5 377.1V374.7M158.5 379.2V370.4M159.5 377.1V368.3M160.5 379.2V376.2M161.5 378.8V373.4M162.5 376.7V369.0M163.5 376.9V368.7M164.5 377.3V375.7M165.5 377.7V373.6M166.5 378.9V377.4M168.5 378.6V370.3M170.5 377.9V373.7M171.5 379.4V371.6M173.5 379.5V376.6M175.5 376.5V368.1M176.5 376.8V369.9M177.5 376.0V372.3M178.5 378.4V373.3M180.5 376.1V369.6M181.5 377.4V374.7M185.5 378.4V376.2M186.5 379.1V375.8M187.5 375.3V370.7M188.5 377.6V373.2M190.5 378.8V373.6M191.5 378.5V375.1M192.5 378.3V369.7M193.5 379.2V372.4M194.5 379.2V373.3M197.5 379.5V374.1M199.5 378.9V374.0M200.5 376.4V369.0M201.5 376.7V374.3M202.5 378.0V371.2M203.5 376.6V373.4M204.5 379.1V375.3M206.5 378.7V375.4M207.5 376.2V374.5M208.5 378.7V374.0M209.5 377.0V375.3M210.5 375.2V368.5M211.5 378.4V375.4M212.5 376.0V368.4M213.5 378.8V370.2M214.5 375.8V372.7M215.5 376.8V372.3M217.5 379.0V374.6M220.5 371.9V369.0M221.5 379.5V375.1M222.5 378.9V376.2M223.5 376.2V367.5M224.5 375.1V367.4M225.5 378.9V374.6M226.5 379.2V375.0M227.5 377.3V370.0M228.5 379.1V370.7M229.5 379.4V375.9M230.5 374.8V371.3M231.5 378.8V371.6M232.5 377.9V369.3M234.5 378.6V375.3M235.5 374.5V366.9M236.5 379.3V372.0M237.5 378.6V371.2M238.5 377.8V374.4M241.5 377.8V375.6M242.5 379.4V374.5M243.5 376.8V369.7M244.5 378.0V375.6M245.5 378.7V371.7M246.5 376.8V373.4M247.5 377.3V372.9M248.5 377.6V374.3M249.5 375.6V370.6M250.5 374.0V365.6M252.5 378.5V370.1M253.5 377.9V370.6M254.5 377.7V371.7M255.5 379.1V376.0M256.5 377.4V371.0M257.5 377.5V374.7M258.5 379.4V371.9M259.5 378.6V372.9M260.5 379.1V376.4M261.5 378.0V369.3M262.5 378.5V374.4M263.5 374.6V371.6M264.5 373.9V372.4M265.5 375.9V367.8M266.5 377.6V376.0M267.5 376.4V370.3M268.5 375.8V373.2M269.5 374.5V369.4M274.5 379.4V371.1M275.5 378.9V375.7M276.5 378.3V370.6M277.5 379.1V374.7M278.5 377.3V370.4M279.5 376.8V375.0M280.5 378.8V372.8M281.5 378.2V372.3M282.5 378.2V373.3M283.5 376.5V373.2M284.5 379.1V374.1M285.5 378.5V373.7M286.5 379.3V377.5M287.5 376.4V371.1M288.5 377.7V369.1M289.5 374.9V367.3M292.5 379.2V371.8M293.5 377.6V374.9M294.5 378.7V371.1M295.5 374.6V371.1M296.5 379.4V377.7M297.5 376.8V368.6M298.5 375.1V372.8M300.5 377.9V372.1M301.5 374.0V369.6M302.5 375.3V366.3M303.5 377.1V374.3M304.5 376.6V369.0M305.5 375.4V369.0M306.5 374.6V372.9M307.5 377.8V369.5M308.5 377.9V371.5M309.5 378.9V375.7M310.5 378.7V375.6M312.5 379.3V376.7M313.5 376.8V373.4M314.5 376.7V372.6M315.5 374.6V371.3M316.5 377.7V372.2M317.5 379.4V377.8M319.5 378.6V373.3M320.5 378.4V375.5M322.5 378.8V372.0M323.5 379.4V374.5M324.5 377.0V373.8M325.5 379.5V372.7M326.5 376.1V371.3M327.5 377.8V369.1M329.5 377.8V370.7M330.5 379.3V375.4M332.5 378.1V371.4M333.5 377.0V370.3M334.5 379.2V372.2M335.5 379.0V376.9M336.5 378.1V376.4M337.5 378.8V377.0M338.5 378.5V371.8M339.5 376.8V369.2M343.5 378.3V376.6M344.5 378.6V372.3M345.5 378.3V376.0M346.5 378.2V374.3M347.5 377.8V371.0M348.5 379.3V370.5M349.5 377.7V373.1M350.5 377.0V372.9M352.5 379.1V371.5M353.5 378.0V369.2M354.5 379.5V372.0M355.5 377.5V374.0M356.5 379.4V376.3M357.5 378.4V376.3M358.5 379.5V372.1M359.5 378.1V369.9M360.5 377.7V374.7M361.5 377.4V369.3M362.5 378.0V372.5M363.5 379.4V375.5M364.5 376.3V369.9M365.5 378.4V372.5M366.5 377.4V369.3M367.5 378.8V371.0M368.5 377.8V374.4M369.5 378.2V375.3M370.5 379.3V377.1M372.5 378.2V371.2M373.5 378.5V375.4M374.5 376.5V372.0M375.5 378.6V373.6M376.5 377.1V372.5M377.5 377.5V370.4M378.5 378.2V371.3M380.5 376.1V369.8M381.5 378.3V373.7M382.5 376.6V370.4M383.5 377.3V372.8M385.5 378.2V373.8M387.5 376.8V369.5M388.5 378.8V376.6M389.5 376.1V369.8M390.5 378.6V374.0M391.5 378.7V371.5M393.5 379.0V374.5M394.5 378.9V372.2M395.5 379.4V370.8M396.5 377.9V370.4M397.5 379.2V371.7M398.5 378.4V372.7M399.5 377.5V369.9M400.5 379.0V375.3M401.5 376.6V368.7M402.5 376.6V373.1M403.5 379.4V375.8M404.5 379.4V374.3M405.5 377.4V368.9M406.5 377.0V369.3M407.5 379.2V373.0M409.5 378.6V376.0M410.5 378.1V374.0M411.5 376.3V368.1M412.5 377.3V370.8M413.5 378.5V371.8M414.5 375.4V370.6M415.5 377.9V375.3M416.5 378.9V373.9M417.5 376.9V368.9M418.5 379.4V373.6M419.5 378.4V369.6M420.5 377.7V376.0M421.5 377.4V368.5M422.5 374.9V366.6M424.5 378.1V373.0M425.5 379.3V374.6M426.5 378.0V374.3M427.5 377.4V372.1M428.5 378.0V370.6M429.5 378.7V372.5M430.5 377.8V370.9M431.5 378.8V377.3M433.5 377.0V368.7M434.5 377.5V371.3M435.5 376.8V370.3M436.5 377.6V375.3M438.5 378.6V374.4M439.5 378.9V375.1M440.5 376.7V372.0M441.5 378.8V377.0M442.5 379.2V370.8M443.5 377.3V368.8M444.5 379.3V374.7M445.5 379.2V377.7M446.5 378.3V369.5M447.5 379.2V375.9M448.5 379.2V377.3M449.5 378.5V376.4M450.5 375.3V370.3M451.5 379.4V377.8M452.5 373.8V371.7M454.5 378.2V376.2M455.5 377.4V374.8M456.5 378.4V372.1M457.5 377.6V369.0M458.5 378.4V374.7M459.5 378.3V372.3M460.5 375.6V369.5M461.5 375.4V368.7M463.5 378.9V375.4M464.5 377.8V370.2M465.5 375.5V367.5M466.5 378.4V370.5M467.5 377.6V375.4M468.5 375.0V372.0M469.5 378.0V371.5M470.5 378.8V375.4M471.5 378.9V371.3M472.5 377.1V371.3M473.5 377.5V371.6M474.5 377.7V374.9M475.5 377.7V372.3M476.5 377.3V368.4M477.5 377.1V374.4M478.5 377.6V372.2M479.5 375.1V369.3M480.5 379.2V374.5M482.5 375.5V373.7M483.5 379.1V373.4M484.5 378.7V370.1M485.5 376.8V374.4M486.5 378.3V372.6M487.5 376.3V371.5M489.5 377.9V374.5M491.5 376.0V368.6M492.5 377.1V368.2M493.5 379.3V375.6M494.5 374.3V372.0M495.5 379.5V376.7M496.5 378.4V371.8M498.5 378.9V370.4M499.5 378.6V376.3M500.5 378.7V372.5M501.5 377.3V371.1M502.5 376.0V374.1M504.5 379.1V374.5M505.5 378.9V376.2M506.5 375.2V366.8M507.5 374.8V371.5M508.5 377.5V373.6M512.5 377.5V369.6M513.5 378.0V372.9M514.5 378.2V371.5M515.5 376.8V372.9M516.5 377.2V372.7M517.5 375.9V371.2M518.5 376.1V366.7M519.5 377.3V370.9M520.5 376.7V367.0M521.5 374.9V371.1M522.5 373.5V363.1M523.5 376.0V369.2M524.5 375.1V367.1M525.5 375.6V365.3M526.5 376.5V366.8M529.5 373.6V364.7M530.5 376.0V369.7M531.5 375.7V365.4M532.5 375.3V365.8M534.5 374.5V368.7M535.5 373.6V364.9M537.5 373.4V366.3M539.5 373.1V363.0M540.5 373.2V364.4M541.5 369.0V355.9M542.5 372.3V365.6M543.5 369.7V360.3M544.5 373.4V363.1M545.5 374.2V360.7M549.5 371.6V360.2M551.5 373.5V363.9M552.5 373.5V365.0M554.5 372.7V364.4M555.5 374.0V365.5M556.5 373.8V366.8M557.5 373.1V361.9M558.5 372.1V361.7M559.5 372.8V364.9M560.5 374.3V363.6M561.5 373.7V363.7M562.5 373.5V361.4M563.5 373.1V363.9M564.5 373.0V365.0M565.5 374.6V365.7M566.5 373.4V360.8M567.5 371.1V359.1M568.5 374.3V361.1M569.5 371.0V360.9M570.5 374.6V365.2M571.5 372.6V362.9M572.5 372.5V363.3M573.5 373.2V360.6M574.5 373.4V365.7M575.5 372.1V358.9M576.5 373.4V359.9M577.5 374.4V363.9" stroke="#ece800" stroke-width="1" stroke-opacity="0.88"/><path d="M43.5 372.2V369.4M44.5 375.5V371.4M45.5 370.3V367.5M50.5 374.9V372.2M55.5 371.5V370.2M62.5 376.7V371.9M69.5 377.4V375.3M83.5 375.9V371.0M101.5 374.0V372.1M110.5 373.8V368.9M111.5 374.6V370.5M114.5 370.6V369.4M119.5 376.1V374.4M128.5 375.2V373.7M129.5 373.5V369.1M134.5 373.9V371.4M135.5 371.6V369.6M136.5 374.6V373.5M176.5 369.9V366.0M177.5 372.3V367.6M194.5 373.3V370.7M202.5 371.2V370.0M222.5 376.2V374.1M227.5 370.0V368.9M232.5 369.3V367.4M237.5 371.2V369.4M238.5 374.4V373.3M250.5 365.6V363.4M285.5 373.7V371.0M287.5 371.1V368.0M308.5 371.5V370.5M312.5 376.7V373.1M313.5 373.4V369.8M322.5 372.0V367.6M324.5 373.8V371.5M336.5 376.4V371.7M353.5 369.2V366.2M359.5 369.9V365.4M393.5 374.5V371.9M407.5 373.0V371.9M417.5 368.9V364.6M419.5 369.6V366.1M422.5 366.6V362.8M441.5 377.0V372.8M444.5 374.7V371.1M446.5 369.5V365.0M451.5 377.8V374.2M458.5 374.7V369.8M478.5 372.2V371.0M492.5 368.2V366.7M496.5 371.8V367.9M506.5 366.8V361.8M513.5 372.9V371.0M514.5 371.5V367.9M515.5 372.9V367.8M516.5 372.7V370.2M522.5 363.1V359.6M529.5 364.7V357.4M530.5 369.7V365.1M531.5 365.4V361.7M534.5 368.7V362.8M535.5 364.9V358.5M539.5 363.0V354.7M540.5 364.4V358.4M544.5 363.1V356.7M549.5 360.2V353.5M554.5 364.4V357.6M555.5 365.5V359.8M557.5 361.9V354.5M560.5 363.6V357.6M561.5 363.7V355.1M562.5 361.4V356.5M563.5 363.9V356.3M567.5 359.1V351.4M568.5 361.1V353.1M571.5 362.9V355.4M574.5 365.7V360.6M575.5 358.9V350.9M576.5 359.9V353.6" stroke="#d8d400" stroke-width="1" stroke-opacity="0.6"/><rect x="23" y="378.5" width="555" height="14.5" fill="#f4f000"/><path d="M25.5 393V389.5M26.5 393V390.7M27.5 393V391.0M28.5 393V390.5M29.5 393V389.6M30.5 393V390.7M31.5 393V391.1M32.5 393V390.6M33.5 393V389.8M35.5 393V390.9M36.5 393V389.5M37.5 393V390.7M39.5 393V391.2M42.5 393V391.7M44.5 393V389.9M47.5 393V391.6M48.5 393V390.7M49.5 393V391.5M50.5 393V390.4M51.5 393V391.1M53.5 393V391.9M54.5 393V390.0M55.5 393V390.3M56.5 393V391.2M58.5 393V390.3M59.5 393V390.8M60.5 393V391.3M61.5 393V390.7M63.5 393V391.0M64.5 393V391.6M66.5 393V391.7M67.5 393V390.7M69.5 393V390.0M70.5 393V392.0M72.5 393V390.2M73.5 393V391.6M74.5 393V391.8M76.5 393V391.1M77.5 393V391.0M78.5 393V389.8M79.5 393V389.6M80.5 393V390.4M81.5 393V391.9M84.5 393V389.8M86.5 393V390.5M88.5 393V389.6M89.5 393V391.0M91.5 393V391.2M93.5 393V390.0M94.5 393V391.6M95.5 393V391.5M97.5 393V390.6M98.5 393V390.7M99.5 393V391.0M100.5 393V391.7M102.5 393V391.4M103.5 393V391.3M104.5 393V391.9M105.5 393V391.1M106.5 393V390.2M107.5 393V391.3M109.5 393V390.9M112.5 393V391.1M114.5 393V389.6M115.5 393V389.6M116.5 393V391.4M117.5 393V391.7M119.5 393V389.8M120.5 393V391.1M121.5 393V390.5M122.5 393V389.8M123.5 393V390.7M124.5 393V391.3M126.5 393V390.4M127.5 393V391.2M128.5 393V391.8M129.5 393V389.9M130.5 393V390.3M131.5 393V390.6M132.5 393V390.7M133.5 393V391.8M134.5 393V391.4M135.5 393V390.2M136.5 393V391.0M141.5 393V391.3M142.5 393V390.3M143.5 393V391.1M144.5 393V390.4M145.5 393V391.4M147.5 393V390.4M148.5 393V391.7M152.5 393V391.9M153.5 393V391.5M154.5 393V391.0M155.5 393V391.2M156.5 393V391.6M158.5 393V390.2M159.5 393V390.9M160.5 393V391.1M161.5 393V389.9M163.5 393V391.9M165.5 393V391.9M166.5 393V391.7M168.5 393V389.7M170.5 393V390.3M171.5 393V390.1M173.5 393V391.8M175.5 393V389.7M176.5 393V390.2M178.5 393V390.9M179.5 393V390.3M180.5 393V390.7M182.5 393V390.1M183.5 393V390.2M185.5 393V390.6M187.5 393V390.6M188.5 393V391.9M189.5 393V391.0M190.5 393V391.2M191.5 393V390.2M192.5 393V391.4M193.5 393V390.7M194.5 393V389.7M195.5 393V391.3M197.5 393V390.6M198.5 393V390.0M199.5 393V390.1M200.5 393V390.3M201.5 393V390.8M204.5 393V391.3M205.5 393V391.5M206.5 393V391.3M207.5 393V390.2M208.5 393V391.7M209.5 393V390.8M210.5 393V391.6M211.5 393V392.0M214.5 393V390.2M216.5 393V391.7M217.5 393V390.9M218.5 393V390.6M219.5 393V389.7M220.5 393V390.4M222.5 393V391.4M223.5 393V391.7M224.5 393V390.1M226.5 393V391.5M227.5 393V389.9M229.5 393V390.0M232.5 393V391.5M234.5 393V391.1M235.5 393V391.1M237.5 393V391.9M238.5 393V390.4M243.5 393V390.8M244.5 393V391.3M245.5 393V391.8M246.5 393V391.6M247.5 393V389.6M248.5 393V391.9M249.5 393V391.5M251.5 393V389.9M254.5 393V391.3M255.5 393V390.7M256.5 393V391.2M257.5 393V390.3M260.5 393V391.3M261.5 393V390.6M262.5 393V391.5M263.5 393V391.2M264.5 393V389.6M269.5 393V390.0M270.5 393V390.3M271.5 393V391.3M272.5 393V389.6M273.5 393V390.4M274.5 393V391.1M276.5 393V391.5M277.5 393V390.9M278.5 393V390.3M279.5 393V390.5M280.5 393V390.7M281.5 393V391.0M282.5 393V391.5M284.5 393V391.7M286.5 393V391.8M287.5 393V391.4M288.5 393V390.6M289.5 393V390.6M290.5 393V390.7M291.5 393V391.8M292.5 393V391.8M293.5 393V389.8M294.5 393V390.2M296.5 393V389.5M298.5 393V389.9M299.5 393V391.6M301.5 393V390.1M302.5 393V390.1M303.5 393V391.4M304.5 393V392.0M305.5 393V391.5M306.5 393V390.2M307.5 393V389.8M308.5 393V389.8M309.5 393V389.7M311.5 393V390.1M312.5 393V390.1M313.5 393V389.9M314.5 393V391.1M318.5 393V390.5M319.5 393V390.6M321.5 393V389.7M322.5 393V391.4M323.5 393V390.9M325.5 393V391.7M326.5 393V391.7M328.5 393V390.6M329.5 393V390.3M330.5 393V391.6M332.5 393V390.3M335.5 393V391.1M336.5 393V390.7M339.5 393V391.5M341.5 393V391.0M342.5 393V391.6M344.5 393V389.8M345.5 393V391.8M346.5 393V391.5M348.5 393V391.9M349.5 393V391.1M350.5 393V390.6M351.5 393V391.1M352.5 393V390.6M353.5 393V391.9M354.5 393V389.5M355.5 393V391.6M356.5 393V391.3M357.5 393V390.7M358.5 393V390.6M359.5 393V389.6M361.5 393V390.6M365.5 393V390.4M366.5 393V391.3M370.5 393V391.2M373.5 393V390.4M374.5 393V390.6M375.5 393V391.8M376.5 393V391.2M378.5 393V391.1M379.5 393V391.4M380.5 393V391.7M381.5 393V389.8M382.5 393V390.9M383.5 393V391.2M384.5 393V391.8M385.5 393V391.2M387.5 393V389.7M388.5 393V389.7M389.5 393V391.8M390.5 393V390.5M392.5 393V390.1M393.5 393V389.8M394.5 393V390.8M396.5 393V391.4M397.5 393V391.6M398.5 393V390.2M399.5 393V391.0M400.5 393V390.5M402.5 393V391.5M405.5 393V391.8M408.5 393V391.7M409.5 393V390.7M411.5 393V389.7M412.5 393V391.2M414.5 393V391.0M415.5 393V391.2M416.5 393V391.0M417.5 393V390.4M418.5 393V390.8M419.5 393V391.4M420.5 393V392.0M422.5 393V389.5M423.5 393V390.5M425.5 393V391.8M426.5 393V391.6M428.5 393V390.0M429.5 393V390.7M430.5 393V390.6M431.5 393V390.5M432.5 393V390.1M433.5 393V390.2M436.5 393V390.1M438.5 393V391.3M439.5 393V389.6M440.5 393V392.0M441.5 393V390.4M443.5 393V389.5M444.5 393V390.1M445.5 393V391.9M446.5 393V391.8M447.5 393V390.6M448.5 393V389.7M449.5 393V391.6M450.5 393V390.2M452.5 393V391.9M454.5 393V389.5M455.5 393V390.4M456.5 393V390.0M457.5 393V391.2M459.5 393V390.2M460.5 393V390.4M461.5 393V389.8M462.5 393V390.6M463.5 393V389.7M465.5 393V391.4M466.5 393V391.3M467.5 393V391.4M468.5 393V390.1M469.5 393V391.3M471.5 393V390.6M472.5 393V389.8M474.5 393V390.1M476.5 393V391.2M477.5 393V389.8M478.5 393V390.3M479.5 393V390.9M480.5 393V389.8M481.5 393V389.8M482.5 393V390.1M484.5 393V389.8M486.5 393V391.9M487.5 393V389.6M488.5 393V389.7M489.5 393V390.2M490.5 393V391.6M491.5 393V391.8M492.5 393V389.7M496.5 393V391.4M498.5 393V391.9M499.5 393V391.4M500.5 393V391.7M501.5 393V389.5M502.5 393V389.8M503.5 393V390.8M504.5 393V390.9M505.5 393V390.3M506.5 393V390.2M507.5 393V391.7M508.5 393V390.8M510.5 393V391.5M514.5 393V391.6M515.5 393V391.8M516.5 393V390.7M517.5 393V390.6M518.5 393V392.0M519.5 393V390.4M520.5 393V390.6M521.5 393V389.5M524.5 393V391.2M525.5 393V389.6M526.5 393V391.0M527.5 393V391.6M529.5 393V390.5M531.5 393V390.5M532.5 393V391.4M533.5 393V391.7M537.5 393V390.3M538.5 393V390.4M539.5 393V391.2M541.5 393V390.1M543.5 393V390.5M545.5 393V390.4M547.5 393V390.2M548.5 393V390.7M549.5 393V390.3M550.5 393V390.4M551.5 393V391.4M552.5 393V391.3M554.5 393V390.2M555.5 393V390.8M556.5 393V391.6M558.5 393V390.7M559.5 393V390.0M560.5 393V391.6M562.5 393V390.4M566.5 393V391.0M569.5 393V391.6M570.5 393V391.7M571.5 393V390.0M572.5 393V390.9M573.5 393V391.0M575.5 393V390.9M576.5 393V390.0" stroke="#0a0a20" stroke-width="1" stroke-opacity="0.6"/></svg><svg class="r" style="left:0;top:0" width="600" height="600"><rect x="25" y="308.5" width="1" height="85" fill="rgb(20,210,20)" opacity="0.5"/><rect x="26" y="308.5" width="1" height="85" fill="rgb(20,210,20)" opacity="0.28"/><rect x="27" y="308.5" width="1" height="85" fill="rgb(20,210,20)" opacity="0.43"/><rect x="86" y="308.5" width="1" height="85" fill="rgb(20,210,20)" opacity="0.5"/><rect x="87" y="308.5" width="1" height="85" fill="rgb(20,210,20)" opacity="0.28"/><rect x="88" y="308.5" width="1" height="85" fill="rgb(20,210,20)" opacity="0.43"/><rect x="147" y="308.5" width="1" height="85" fill="rgb(20,210,20)" opacity="0.5"/><rect x="148" y="308.5" width="1" height="85" fill="rgb(20,210,20)" opacity="0.28"/><rect x="149" y="308.5" width="1" height="85" fill="rgb(20,210,20)" opacity="0.43"/><rect x="209" y="308.5" width="1" height="85" fill="rgb(20,210,20)" opacity="0.5"/><rect x="210" y="308.5" width="1" height="85" fill="rgb(20,210,20)" opacity="0.28"/><rect x="211" y="308.5" width="1" height="85" fill="rgb(20,210,20)" opacity="0.43"/><rect x="270" y="308.5" width="1" height="85" fill="rgb(20,210,20)" opacity="0.5"/><rect x="271" y="308.5" width="1" height="85" fill="rgb(20,210,20)" opacity="0.28"/><rect x="272" y="308.5" width="1" height="85" fill="rgb(20,210,20)" opacity="0.43"/><rect x="332" y="308.5" width="1" height="85" fill="rgb(20,210,20)" opacity="0.5"/><rect x="333" y="308.5" width="1" height="85" fill="rgb(20,210,20)" opacity="0.28"/><rect x="334" y="308.5" width="1" height="85" fill="rgb(20,210,20)" opacity="0.43"/><rect x="393" y="308.5" width="1" height="85" fill="rgb(20,210,20)" opacity="0.5"/><rect x="394" y="308.5" width="1" height="85" fill="rgb(20,210,20)" opacity="0.28"/><rect x="395" y="308.5" width="1" height="85" fill="rgb(20,210,20)" opacity="0.43"/><rect x="454" y="308.5" width="1" height="85" fill="rgb(20,210,20)" opacity="0.5"/><rect x="455" y="308.5" width="1" height="85" fill="rgb(20,210,20)" opacity="0.28"/><rect x="456" y="308.5" width="1" height="85" fill="rgb(20,210,20)" opacity="0.43"/><rect x="516" y="308.5" width="1" height="85" fill="rgb(20,210,20)" opacity="0.5"/><rect x="517" y="308.5" width="1" height="85" fill="rgb(20,210,20)" opacity="0.28"/><rect x="518" y="308.5" width="1" height="85" fill="rgb(20,210,20)" opacity="0.43"/><rect x="577" y="308.5" width="1" height="85" fill="rgb(20,210,20)" opacity="0.5"/><rect x="578" y="308.5" width="1" height="85" fill="rgb(20,210,20)" opacity="0.28"/><rect x="579" y="308.5" width="1" height="85" fill="rgb(20,210,20)" opacity="0.43"/><rect x="578" y="308.5" width="1" height="85" fill="#127a12"/><rect x="22.5" y="308.5" width="1" height="85" fill="#c06030"/></svg><div class="r" style="left:23.5px;top:379px;width:15.2px;height:11px;background:#0c0a08;"></div><div class="t" style="left:24px;transform-origin:0 0;top:381.00px;font-size:8.4px;font-weight:normal;color:#c86428;transform:scaleX(0.85);">Eval</div><div class="r" style="left:563.5px;top:372.6px;width:14.5px;height:9.5px;background:#0c0a08;"></div><div class="t" style="left:563.8px;transform-origin:0 0;top:373.80px;font-size:8.4px;font-weight:normal;color:#c86428;transform:scaleX(0.85);">Eval</div><div class="t b" style="left:26px;transform-origin:0 0;top:394.93px;font-size:8.7px;font-weight:bold;color:#e8f0f4;transform:scaleX(0.92);">0 sym</div><div class="t b" style="right:24.700000000000045px;transform-origin:100% 0;top:394.93px;font-size:8.7px;font-weight:bold;color:#e8f0f4;transform:scaleX(0.92);">13338 sym</div><div class="r" style="left:22px;top:406.5px;width:278px;height:84px;background:#000;"></div><div class="r" style="left:22px;top:406.7px;width:278px;height:11px;background:#3e4448;"></div><div class="t b" style="left:24px;transform-origin:0 0;top:408.53px;font-size:8.7px;font-weight:bold;color:#e8f0f4;transform:scaleX(0.91);">3 Mag(Capture Buffer)</div><div class="r" style="left:262.5px;top:410px;width:4.5px;height:4.5px;border-radius:50%;background:#f8f000;box-shadow:0 0 0 0.8px #182040"></div><div class="t" style="right:307.5px;transform-origin:100% 0;top:408.73px;font-size:8.7px;font-weight:normal;color:#e8f0f4;transform:scaleX(0.92);">1 Clrw</div><svg class="r" style="left:0;top:0" width="600" height="600" shape-rendering="crispEdges"><path d="M22.5 418.5H299.0" stroke="#808080" stroke-width="1"/><path d="M22.5 431.5H299.0" stroke="#808080" stroke-width="1"/><path d="M22.5 443.5H299.0" stroke="#808080" stroke-width="1"/><path d="M22.5 456.5H299.0" stroke="#808080" stroke-width="1"/><path d="M22.5 468.5H299.0" stroke="#808080" stroke-width="1"/><path d="M22.5 480.5H299.0" stroke="#808080" stroke-width="1"/><path d="M50.5 418.5V480.5" stroke="#808080" stroke-width="1"/><path d="M77.5 418.5V480.5" stroke="#808080" stroke-width="1"/><path d="M105.5 418.5V480.5" stroke="#808080" stroke-width="1"/><path d="M133.5 418.5V480.5" stroke="#808080" stroke-width="1"/><path d="M160.5 418.5V480.5" stroke="#808080" stroke-width="1"/><path d="M188.5 418.5V480.5" stroke="#808080" stroke-width="1"/><path d="M216.5 418.5V480.5" stroke="#808080" stroke-width="1"/><path d="M243.5 418.5V480.5" stroke="#808080" stroke-width="1"/><path d="M271.5 418.5V480.5" stroke="#808080" stroke-width="1"/><path d="M299 418.5V480.5" stroke="#808080"/></svg><div class="r" style="left:196px;top:418.5px;width:57.5px;height:58.5px;background:rgba(10,75,150,0.62);border:1px solid #1f6cb8;box-sizing:border-box;"></div><svg class="r" style="left:0;top:0" width="600" height="600"><path d="M23.5 420.6V438.7M24.5 420.8V440.7M25.5 420.4V440.2M26.5 420.7V441.6M27.5 420.8V440.5M28.5 421.8V439.4M29.5 421.4V441.0M30.5 421.0V439.0M31.5 421.4V440.5M32.5 421.3V440.7M33.5 421.5V439.2M34.5 420.5V441.2M35.5 421.2V440.9M36.5 421.1V440.9M37.5 421.2V439.6M38.5 421.2V440.2M39.5 421.0V441.8M40.5 421.6V439.5M41.5 420.5V439.7M42.5 421.6V439.6M43.5 421.5V438.8M44.5 421.1V438.6M45.5 421.8V443.0M46.5 420.4V440.3M47.5 420.9V438.6M48.5 421.2V443.4M49.5 421.8V438.9M50.5 420.7V443.2M51.5 421.1V439.5M52.5 421.7V438.7M53.5 420.5V443.8M54.5 421.3V441.3M55.5 420.9V440.3M56.5 421.1V442.9M57.5 420.5V439.6M58.5 421.8V439.9M59.5 421.9V440.0M60.5 421.5V440.2M61.5 421.7V440.4M62.5 420.6V442.9M63.5 421.1V441.0M64.5 421.5V440.1M65.5 420.5V439.2M66.5 421.3V440.3M67.5 421.9V441.4M68.5 421.7V442.8M69.5 421.0V438.8M70.5 420.5V439.9M71.5 421.5V439.4M72.5 421.9V441.6M73.5 420.9V438.6M74.5 421.9V441.9M75.5 421.4V440.1M76.5 420.8V438.8M77.5 421.9V441.5M78.5 421.0V439.2M79.5 420.9V439.8M80.5 420.7V439.1M81.5 421.3V440.5M82.5 421.4V440.3M83.5 420.6V438.7M84.5 421.0V439.6M85.5 420.7V441.1M86.5 421.8V439.3M87.5 421.8V438.7M88.5 420.6V440.5M89.5 421.2V438.8M90.5 420.7V439.7M91.5 421.2V439.8M92.5 421.2V438.8M93.5 420.8V441.6M94.5 420.4V439.9M95.5 421.8V440.4M96.5 421.4V440.2M97.5 420.8V442.3M98.5 421.4V442.7M99.5 421.7V442.8M100.5 421.1V439.8M101.5 421.6V439.1M102.5 420.6V439.8M103.5 422.0V440.2M104.5 421.2V438.6M105.5 421.4V443.9M106.5 421.7V441.8M107.5 420.7V440.7M108.5 420.6V439.3M109.5 421.6V443.7M110.5 421.1V442.4M111.5 420.9V442.4M112.5 420.6V439.2M113.5 421.7V439.4M114.5 420.8V440.2M115.5 421.5V438.8M116.5 421.5V441.2M117.5 420.5V440.2M118.5 421.4V442.4M119.5 420.4V442.3M120.5 421.4V441.4M121.5 421.0V439.1M122.5 420.5V441.4M123.5 421.5V442.4M124.5 420.5V439.7M125.5 421.9V439.9M126.5 421.4V439.9M127.5 421.9V440.0M128.5 421.7V438.8M129.5 421.9V441.1M130.5 421.0V439.8M131.5 421.2V440.4M132.5 421.5V442.5M133.5 421.9V440.1M134.5 421.0V441.3M135.5 421.2V439.0M136.5 421.7V443.7M137.5 421.6V441.4M138.5 420.5V441.1M139.5 421.8V439.7M140.5 420.5V441.1M141.5 420.8V441.1M142.5 421.1V440.6M143.5 421.5V439.0M144.5 421.5V442.9M145.5 421.7V440.0M146.5 421.2V440.7M147.5 420.7V439.5M148.5 421.0V439.3M149.5 420.9V439.8M150.5 421.1V439.1M151.5 421.0V439.7M152.5 421.9V438.9M153.5 421.6V440.0M154.5 421.2V439.8M155.5 420.8V439.8M156.5 420.9V442.7M157.5 420.5V439.9M158.5 421.9V441.4M159.5 421.3V440.4M160.5 421.7V442.3M161.5 421.9V439.9M162.5 421.0V441.4M163.5 421.0V440.0M164.5 421.8V440.7M165.5 421.8V439.1M166.5 421.1V440.2M167.5 421.3V438.6M168.5 421.8V440.4M169.5 421.5V443.1M170.5 421.8V441.4M171.5 421.8V443.1M172.5 421.4V441.4M173.5 421.7V439.4M174.5 420.6V440.2M175.5 421.0V444.6M176.5 420.9V439.4M177.5 420.8V438.6M178.5 421.7V439.5M179.5 420.8V439.7M180.5 421.3V440.2M181.5 421.7V442.9M182.5 421.6V441.4M183.5 420.5V439.0M184.5 421.0V441.4M185.5 421.8V438.8M186.5 420.9V438.6M187.5 420.6V438.6M188.5 421.1V439.6M189.5 420.9V439.9M190.5 421.1V442.3M191.5 420.8V442.2M192.5 421.6V439.9M193.5 421.6V440.3M194.5 421.6V439.2M195.5 420.7V439.9M196.5 420.5V444.2M197.5 421.7V440.6M198.5 420.6V438.8M199.5 421.9V441.3M200.5 420.6V441.2M201.5 420.7V440.5M202.5 421.5V439.0M203.5 421.6V440.9M204.5 420.6V441.5M205.5 421.0V438.6M206.5 421.1V438.8M207.5 420.5V439.9M208.5 421.2V441.6M209.5 421.8V439.8M210.5 420.6V439.3M211.5 421.4V441.1M212.5 421.6V441.1M213.5 421.5V439.4M214.5 421.5V440.3M215.5 421.4V438.7M216.5 420.8V439.2M217.5 421.4V441.3M218.5 422.0V439.2M219.5 420.8V439.2M220.5 421.9V439.2M221.5 420.6V442.8M222.5 422.0V439.0M223.5 420.7V440.1M224.5 421.8V438.6M225.5 421.3V438.6M226.5 421.4V441.2M227.5 421.3V439.5M228.5 420.4V440.9M229.5 420.6V442.5M230.5 420.6V439.9M231.5 420.6V439.0M232.5 420.6V443.3M233.5 420.6V440.1M234.5 420.4V442.8M235.5 421.4V439.1M236.5 421.4V438.8M237.5 421.7V443.0M238.5 420.4V441.0M239.5 421.8V442.9M240.5 421.5V443.9M241.5 420.9V440.6M242.5 421.4V440.0M243.5 422.0V440.3M244.5 421.1V440.5M245.5 421.9V438.7M246.5 421.8V442.3M247.5 421.7V441.5M248.5 421.3V441.7M249.5 421.4V438.8M250.5 421.9V439.9M251.5 420.7V444.6M252.5 421.5V443.8M253.5 421.5V438.6M254.5 420.8V442.4M255.5 420.7V439.1M256.5 421.3V444.9M257.5 420.9V441.3M258.5 420.6V438.9M259.5 421.5V440.4M260.5 420.6V442.7M261.5 421.1V440.9M262.5 420.9V439.6M263.5 420.8V439.0M264.5 420.8V442.1M265.5 420.7V438.6M266.5 420.7V441.3M267.5 421.0V439.4M268.5 420.5V441.2M269.5 421.9V439.0M270.5 421.7V441.5M271.5 420.6V440.9M272.5 421.0V443.0M273.5 420.8V440.3M274.5 421.2V440.1M275.5 421.7V439.1M276.5 420.6V439.1M277.5 420.6V439.5M278.5 421.1V438.7M279.5 421.2V439.1M280.5 420.8V439.7M281.5 421.9V441.7M282.5 421.2V439.4M283.5 420.7V440.0M284.5 421.1V439.5M285.5 420.9V439.5M286.5 420.6V442.0M287.5 420.4V438.8M288.5 421.6V441.0M289.5 421.4V438.9M290.5 421.9V439.6M291.5 421.8V443.4M292.5 421.8V440.1M293.5 421.1V439.4M294.5 421.3V439.8M295.5 420.4V439.4M296.5 421.2V439.1M297.5 421.4V439.4M298.5 422.0V443.1" stroke="#f4f000" stroke-width="1"/><path d="M23.5 438.7V440.3M24.5 440.7V443.2M25.5 440.2V441.7M26.5 441.6V442.2M27.5 440.5V441.3M28.5 439.4V440.7M29.5 441.0V441.8M30.5 439.0V439.8M31.5 440.5V441.9M32.5 440.7V443.0M33.5 439.2V443.4M34.5 441.2V441.3M35.5 440.9V446.4M36.5 440.9V448.4M37.5 439.6V443.0M38.5 440.2V442.9M39.5 441.8V447.7M40.5 439.5V439.7M41.5 439.7V440.5M42.5 439.6V440.8M43.5 438.8V440.2M44.5 438.6V450.8M45.5 443.0V445.2M46.5 440.3V443.5M47.5 438.6V438.9M48.5 443.4V444.6M49.5 438.9V441.4M50.5 443.2V447.9M51.5 439.5V444.8M52.5 438.7V441.5M53.5 443.8V445.8M54.5 441.3V442.8M55.5 440.3V442.1M56.5 442.9V446.8M57.5 439.6V444.8M58.5 439.9V444.8M59.5 440.0V446.6M60.5 440.2V441.7M61.5 440.4V445.8M62.5 442.9V448.7M63.5 441.0V442.6M64.5 440.1V440.9M65.5 439.2V440.9M66.5 440.3V442.4M67.5 441.4V444.9M68.5 442.8V446.7M69.5 438.8V440.6M70.5 439.9V446.2M71.5 439.4V445.0M72.5 441.6V451.1M73.5 438.6V442.5M74.5 441.9V445.7M75.5 440.1V441.8M76.5 438.8V444.8M77.5 441.5V446.8M78.5 439.2V444.7M79.5 439.8V442.6M80.5 439.1V439.9M81.5 440.5V444.7M82.5 440.3V441.3M83.5 438.7V439.9M84.5 439.6V443.7M85.5 441.1V444.5M86.5 439.3V441.6M87.5 438.7V442.1M88.5 440.5V442.8M89.5 438.8V440.6M90.5 439.7V441.8M91.5 439.8V440.4M92.5 438.8V440.1M93.5 441.6V441.6M94.5 439.9V443.7M95.5 440.4V444.9M96.5 440.2V441.5M97.5 442.3V451.6M98.5 442.7V445.3M99.5 442.8V451.5M100.5 439.8V441.3M101.5 439.1V440.1M102.5 439.8V440.7M103.5 440.2V447.3M104.5 438.6V440.2M105.5 443.9V445.6M106.5 441.8V447.1M107.5 440.7V446.5M108.5 439.3V443.7M109.5 443.7V447.2M110.5 442.4V445.6M111.5 442.4V447.2M112.5 439.2V446.2M113.5 439.4V439.7M114.5 440.2V448.9M115.5 438.8V444.2M116.5 441.2V448.2M117.5 440.2V444.6M118.5 442.4V446.1M119.5 442.3V447.9M120.5 441.4V444.9M121.5 439.1V442.2M122.5 441.4V442.2M123.5 442.4V443.1M124.5 439.7V440.8M125.5 439.9V441.8M126.5 439.9V443.0M127.5 440.0V452.0M128.5 438.8V441.4M129.5 441.1V448.1M130.5 439.8V443.9M131.5 440.4V446.9M132.5 442.5V447.5M133.5 440.1V443.9M134.5 441.3V447.3M135.5 439.0V446.2M136.5 443.7V445.7M137.5 441.4V446.4M138.5 441.1V442.0M139.5 439.7V443.0M140.5 441.1V446.3M141.5 441.1V441.4M142.5 440.6V446.3M143.5 439.0V446.5M144.5 442.9V443.3M145.5 440.0V441.0M146.5 440.7V442.4M147.5 439.5V440.0M148.5 439.3V449.3M149.5 439.8V442.3M150.5 439.1V441.5M151.5 439.7V442.8M152.5 438.9V446.2M153.5 440.0V440.9M154.5 439.8V445.4M155.5 439.8V445.7M156.5 442.7V444.9M157.5 439.9V442.3M158.5 441.4V441.7M159.5 440.4V440.5M160.5 442.3V444.9M161.5 439.9V444.0M162.5 441.4V447.5M163.5 440.0V441.3M164.5 440.7V445.4M165.5 439.1V441.5M166.5 440.2V448.0M167.5 438.6V442.9M168.5 440.4V442.2M169.5 443.1V443.3M170.5 441.4V441.8M171.5 443.1V447.4M172.5 441.4V441.6M173.5 439.4V439.8M174.5 440.2V445.1M175.5 444.6V445.0M176.5 439.4V445.1M177.5 438.6V442.6M178.5 439.5V446.8M179.5 439.7V442.2M180.5 440.2V441.6M181.5 442.9V444.6M182.5 441.4V446.1M183.5 439.0V443.4M184.5 441.4V446.7M185.5 438.8V446.0M186.5 438.6V440.2M187.5 438.6V444.4M188.5 439.6V441.0M189.5 439.9V442.1M190.5 442.3V444.3M191.5 442.2V448.0M192.5 439.9V448.5M193.5 440.3V442.8M194.5 439.2V441.3M195.5 439.9V448.3M196.5 444.2V445.9M197.5 440.6V442.4M198.5 438.8V439.6M199.5 441.3V442.5M200.5 441.2V445.2M201.5 440.5V440.5M202.5 439.0V449.6M203.5 440.9V446.3M204.5 441.5V444.3M205.5 438.6V446.2M206.5 438.8V446.8M207.5 439.9V442.4M208.5 441.6V443.4M209.5 439.8V441.2M210.5 439.3V440.7M211.5 441.1V442.3M212.5 441.1V445.3M213.5 439.4V440.1M214.5 440.3V442.5M215.5 438.7V441.5M216.5 439.2V444.7M217.5 441.3V441.3M218.5 439.2V439.6M219.5 439.2V441.7M220.5 439.2V445.0M221.5 442.8V449.5M222.5 439.0V439.6M223.5 440.1V441.9M224.5 438.6V438.8M225.5 438.6V440.6M226.5 441.2V441.7M227.5 439.5V440.5M228.5 440.9V444.4M229.5 442.5V444.1M230.5 439.9V444.9M231.5 439.0V439.9M232.5 443.3V445.6M233.5 440.1V448.8M234.5 442.8V444.5M235.5 439.1V443.4M236.5 438.8V444.2M237.5 443.0V449.5M238.5 441.0V444.3M239.5 442.9V447.0M240.5 443.9V444.0M241.5 440.6V444.2M242.5 440.0V446.2M243.5 440.3V440.3M244.5 440.5V443.4M245.5 438.7V442.0M246.5 442.3V443.6M247.5 441.5V443.6M248.5 441.7V444.0M249.5 438.8V448.0M250.5 439.9V443.8M251.5 444.6V446.6M252.5 443.8V446.3M253.5 438.6V441.0M254.5 442.4V442.4M255.5 439.1V439.7M256.5 444.9V447.9M257.5 441.3V442.7M258.5 438.9V442.4M259.5 440.4V441.4M260.5 442.7V444.1M261.5 440.9V441.2M262.5 439.6V440.1M263.5 439.0V443.5M264.5 442.1V444.7M265.5 438.6V441.5M266.5 441.3V442.4M267.5 439.4V442.4M268.5 441.2V448.9M269.5 439.0V443.1M270.5 441.5V441.6M271.5 440.9V441.0M272.5 443.0V443.2M273.5 440.3V443.1M274.5 440.1V441.0M275.5 439.1V439.2M276.5 439.1V445.2M277.5 439.5V441.9M278.5 438.7V439.8M279.5 439.1V443.8M280.5 439.7V439.9M281.5 441.7V442.9M282.5 439.4V439.6M283.5 440.0V442.7M284.5 439.5V439.7M285.5 439.5V441.1M286.5 442.0V446.6M287.5 438.8V441.5M288.5 441.0V443.8M289.5 438.9V440.2M290.5 439.6V440.1M291.5 443.4V444.6M292.5 440.1V442.6M293.5 439.4V441.0M294.5 439.8V443.5M295.5 439.4V442.2M296.5 439.1V443.5M297.5 439.4V441.0M298.5 443.1V445.9" stroke="#e4e000" stroke-width="1" stroke-opacity="0.85"/><path d="M35.5 446.4V463.9M99.5 451.5V476.3M118.5 446.1V461.3M128.5 441.4V450.1M193.5 442.8V465.9M227.5 440.5V461.1M251.5 446.6V457.1M257.5 442.7V455.3M287.5 441.5V456.4" stroke="#d8d400" stroke-width="1" stroke-opacity="0.85"/><rect x="23" y="421.6" width="276" height="16.5" fill="#f4f000"/></svg><div class="t" style="left:25.9px;transform-origin:0 0;top:427.24px;font-size:8.8px;font-weight:normal;color:#7c7c70;transform:scaleX(0.92);">-20 dBm</div><div class="t" style="left:25.9px;transform-origin:0 0;top:439.64px;font-size:8.8px;font-weight:normal;color:#7c7c70;transform:scaleX(0.92);">-40 dBm</div><div class="r" style="left:22.5px;top:451.8px;width:33.5px;height:9px;background:#000;"></div><div class="t" style="left:25.9px;transform-origin:0 0;top:452.34px;font-size:8.8px;font-weight:normal;color:#8a8a8a;transform:scaleX(0.92);">-60 dBm</div><div class="r" style="left:22.5px;top:464.1px;width:33.5px;height:9px;background:#000;"></div><div class="t" style="left:25.9px;transform-origin:0 0;top:464.64px;font-size:8.8px;font-weight:normal;color:#8a8a8a;transform:scaleX(0.92);">-80 dBm</div><div class="r" style="left:22.5px;top:477px;width:231px;height:3.6px;background:#20e820;"></div><div class="t b" style="left:26px;transform-origin:0 0;top:482.63px;font-size:8.7px;font-weight:bold;color:#e8f0f4;transform:scaleX(0.92);">0 sym</div><div class="t b" style="right:304px;transform-origin:100% 0;top:482.63px;font-size:8.7px;font-weight:bold;color:#e8f0f4;transform:scaleX(0.92);">64000 sym</div><div class="r" style="left:299.5px;top:405.3px;width:3px;height:85.2px;background:#1c2226;"></div><div class="r" style="left:300.2px;top:405.3px;width:1px;height:85.2px;background:#37474f;"></div><div class="r" style="left:302.5px;top:406.5px;width:277px;height:84px;background:#000;"></div><div class="r" style="left:302.5px;top:408px;width:277px;height:9.5px;background:#2e3438;"></div><div class="t b" style="left:303.8px;transform-origin:0 0;top:408.53px;font-size:8.7px;font-weight:bold;color:#e8f0f4;transform:scaleX(0.91);">4 Symbols</div><div class="t b" style="right:25.299999999999955px;transform-origin:100% 0;top:408.53px;font-size:8.7px;font-weight:bold;color:#e8f0f4;transform:scaleX(0.91);">(Hexadecimal)</div><div class="r" style="left:303.8px;top:418.7px;width:25px;height:67.5px;background:#6b6d78;"></div><div class="r" style="left:330.0px;top:418.7px;width:13.239999999999998px;height:9.5px;background:#6b6d78;"></div><div class="t b" style="left:336.62px;transform-origin:50% 0;top:420.51px;font-size:7.5px;font-weight:bold;color:#e8f0f4;transform:translateX(-50%) scaleX(1.0);">+</div><div class="r" style="left:344.54px;top:418.7px;width:13.239999999999998px;height:9.5px;background:#6b6d78;"></div><div class="t b" style="left:351.16px;transform-origin:50% 0;top:419.93px;font-size:8.7px;font-weight:bold;color:#e8f0f4;transform:translateX(-50%) scaleX(0.92);">1</div><div class="r" style="left:359.08px;top:418.7px;width:13.239999999999998px;height:9.5px;background:#6b6d78;"></div><div class="t b" style="left:365.7px;transform-origin:50% 0;top:420.51px;font-size:7.5px;font-weight:bold;color:#e8f0f4;transform:translateX(-50%) scaleX(1.0);">+</div><div class="r" style="left:373.62px;top:418.7px;width:13.239999999999998px;height:9.5px;background:#6b6d78;"></div><div class="t b" style="left:380.24px;transform-origin:50% 0;top:419.93px;font-size:8.7px;font-weight:bold;color:#e8f0f4;transform:translateX(-50%) scaleX(0.92);">3</div><div class="r" style="left:388.15999999999997px;top:418.7px;width:13.239999999999998px;height:9.5px;background:#6b6d78;"></div><div class="t b" style="left:394.78px;transform-origin:50% 0;top:420.51px;font-size:7.5px;font-weight:bold;color:#e8f0f4;transform:translateX(-50%) scaleX(1.0);">+</div><div class="r" style="left:402.7px;top:418.7px;width:13.239999999999998px;height:9.5px;background:#6b6d78;"></div><div class="t b" style="left:409.32px;transform-origin:50% 0;top:419.93px;font-size:8.7px;font-weight:bold;color:#e8f0f4;transform:translateX(-50%) scaleX(0.92);">5</div><div class="r" style="left:417.24px;top:418.7px;width:13.239999999999998px;height:9.5px;background:#6b6d78;"></div><div class="t b" style="left:423.86px;transform-origin:50% 0;top:420.51px;font-size:7.5px;font-weight:bold;color:#e8f0f4;transform:translateX(-50%) scaleX(1.0);">+</div><div class="r" style="left:431.78px;top:418.7px;width:13.239999999999998px;height:9.5px;background:#6b6d78;"></div><div class="t b" style="left:438.4px;transform-origin:50% 0;top:419.93px;font-size:8.7px;font-weight:bold;color:#e8f0f4;transform:translateX(-50%) scaleX(0.92);">7</div><div class="r" style="left:446.32px;top:418.7px;width:13.239999999999998px;height:9.5px;background:#6b6d78;"></div><div class="t b" style="left:452.94px;transform-origin:50% 0;top:420.51px;font-size:7.5px;font-weight:bold;color:#e8f0f4;transform:translateX(-50%) scaleX(1.0);">+</div><div class="r" style="left:460.86px;top:418.7px;width:13.239999999999998px;height:9.5px;background:#6b6d78;"></div><div class="t b" style="left:467.48px;transform-origin:50% 0;top:419.93px;font-size:8.7px;font-weight:bold;color:#e8f0f4;transform:translateX(-50%) scaleX(0.92);">9</div><div class="r" style="left:475.4px;top:418.7px;width:13.239999999999998px;height:9.5px;background:#6b6d78;"></div><div class="t b" style="left:482.02px;transform-origin:50% 0;top:420.51px;font-size:7.5px;font-weight:bold;color:#e8f0f4;transform:translateX(-50%) scaleX(1.0);">+</div><div class="r" style="left:489.94px;top:418.7px;width:13.239999999999998px;height:9.5px;background:#6b6d78;"></div><div class="t b" style="left:496.56px;transform-origin:50% 0;top:419.93px;font-size:8.7px;font-weight:bold;color:#e8f0f4;transform:translateX(-50%) scaleX(0.92);">11</div><div class="r" style="left:504.48px;top:418.7px;width:13.239999999999998px;height:9.5px;background:#6b6d78;"></div><div class="t b" style="left:511.1px;transform-origin:50% 0;top:420.51px;font-size:7.5px;font-weight:bold;color:#e8f0f4;transform:translateX(-50%) scaleX(1.0);">+</div><div class="r" style="left:519.02px;top:418.7px;width:13.239999999999998px;height:9.5px;background:#6b6d78;"></div><div class="t b" style="left:525.64px;transform-origin:50% 0;top:419.93px;font-size:8.7px;font-weight:bold;color:#e8f0f4;transform:translateX(-50%) scaleX(0.92);">13</div><div class="r" style="left:533.56px;top:418.7px;width:13.239999999999998px;height:9.5px;background:#6b6d78;"></div><div class="t b" style="left:540.18px;transform-origin:50% 0;top:420.51px;font-size:7.5px;font-weight:bold;color:#e8f0f4;transform:translateX(-50%) scaleX(1.0);">+</div><div class="r" style="left:548.1px;top:418.7px;width:13.239999999999998px;height:9.5px;background:#6b6d78;"></div><div class="t b" style="left:554.72px;transform-origin:50% 0;top:419.93px;font-size:8.7px;font-weight:bold;color:#e8f0f4;transform:translateX(-50%) scaleX(0.92);">15</div><div class="r" style="left:303.8px;top:428.5px;width:25px;height:1px;background:#4c5059;"></div><div class="t b" style="right:272.5px;transform-origin:100% 0;top:430.33px;font-size:8.7px;font-weight:bold;color:#e8f0f4;transform:scaleX(0.92);">0</div><div class="r" style="left:303.8px;top:438.0px;width:25px;height:1px;background:#4c5059;"></div><div class="t b" style="right:272.5px;transform-origin:100% 0;top:439.83px;font-size:8.7px;font-weight:bold;color:#e8f0f4;transform:scaleX(0.92);">16</div><div class="r" style="left:303.8px;top:447.5px;width:25px;height:1px;background:#4c5059;"></div><div class="t b" style="right:272.5px;transform-origin:100% 0;top:449.33px;font-size:8.7px;font-weight:bold;color:#e8f0f4;transform:scaleX(0.92);">32</div><div class="r" style="left:303.8px;top:457.0px;width:25px;height:1px;background:#4c5059;"></div><div class="t b" style="right:272.5px;transform-origin:100% 0;top:458.83px;font-size:8.7px;font-weight:bold;color:#e8f0f4;transform:scaleX(0.92);">48</div><div class="r" style="left:303.8px;top:466.5px;width:25px;height:1px;background:#4c5059;"></div><div class="t b" style="right:272.5px;transform-origin:100% 0;top:468.33px;font-size:8.7px;font-weight:bold;color:#e8f0f4;transform:scaleX(0.92);">64</div><div class="r" style="left:303.8px;top:476.0px;width:25px;height:1px;background:#4c5059;"></div><div class="t b" style="right:272.5px;transform-origin:100% 0;top:477.83px;font-size:8.7px;font-weight:bold;color:#e8f0f4;transform:scaleX(0.92);">80</div><div class="r" style="left:329.5px;top:429px;width:232.64px;height:19px;background:#117411;"></div><div class="r" style="left:475px;top:438.5px;width:87.60000000000002px;height:9.5px;background:#000;"></div><svg class="r" style="left:0;top:0" width="600" height="600" shape-rendering="crispEdges"><path d="M343.5 429V486" stroke="#3a3a3a" stroke-width="1"/><path d="M358.5 429V486" stroke="#3a3a3a" stroke-width="1"/><path d="M372.5 429V486" stroke="#3a3a3a" stroke-width="1"/><path d="M387.5 429V486" stroke="#3a3a3a" stroke-width="1"/><path d="M402.5 429V486" stroke="#3a3a3a" stroke-width="1"/><path d="M416.5 429V486" stroke="#3a3a3a" stroke-width="1"/><path d="M431.5 429V486" stroke="#3a3a3a" stroke-width="1"/><path d="M445.5 429V486" stroke="#3a3a3a" stroke-width="1"/><path d="M460.5 429V486" stroke="#3a3a3a" stroke-width="1"/><path d="M474.5 429V486" stroke="#3a3a3a" stroke-width="1"/><path d="M489.5 429V486" stroke="#3a3a3a" stroke-width="1"/><path d="M503.5 429V486" stroke="#3a3a3a" stroke-width="1"/><path d="M518.5 429V486" stroke="#3a3a3a" stroke-width="1"/><path d="M532.5 429V486" stroke="#3a3a3a" stroke-width="1"/><path d="M547.5 429V486" stroke="#3a3a3a" stroke-width="1"/><path d="M329.5 429H562.6" stroke="#2ad02a" stroke-width="1.6"/><path d="M329.5 438.5H562.6" stroke="#2ad02a" stroke-width="1.6"/><path d="M329.5 448H562.6" stroke="#2ad02a" stroke-width="1.6"/><path d="M329.5 457.5H562.6" stroke="#2ad02a" stroke-width="1.6"/><path d="M329.5 467H562.6" stroke="#2ad02a" stroke-width="1.6"/><path d="M329.5 476.5H562.6" stroke="#2ad02a" stroke-width="1.6"/><path d="M329.5 486H475" stroke="#2ad02a" stroke-width="1.6"/><path d="M329.5 429V486M475 476.5V486M562.6 429V476.5" stroke="#2ad02a" stroke-width="1.6"/><path d="M475 486H562.6M562.6 476.5V486" stroke="#5a5a5a" stroke-width="1"/></svg><div class="t" style="left:336.62px;transform-origin:50% 0;top:430.33px;font-size:8.7px;font-weight:normal;color:#e8f0f4;transform:translateX(-50%) scaleX(0.92);">00</div><div class="t" style="left:351.16px;transform-origin:50% 0;top:430.33px;font-size:8.7px;font-weight:normal;color:#e8f0f4;transform:translateX(-50%) scaleX(0.92);">01</div><div class="t" style="left:365.7px;transform-origin:50% 0;top:430.33px;font-size:8.7px;font-weight:normal;color:#e8f0f4;transform:translateX(-50%) scaleX(0.92);">03</div><div class="t" style="left:380.24px;transform-origin:50% 0;top:430.33px;font-size:8.7px;font-weight:normal;color:#e8f0f4;transform:translateX(-50%) scaleX(0.92);">02</div><div class="t" style="left:394.78px;transform-origin:50% 0;top:430.33px;font-size:8.7px;font-weight:normal;color:#e8f0f4;transform:translateX(-50%) scaleX(0.92);">00</div><div class="t" style="left:409.32px;transform-origin:50% 0;top:430.33px;font-size:8.7px;font-weight:normal;color:#e8f0f4;transform:translateX(-50%) scaleX(0.92);">02</div><div class="t" style="left:423.86px;transform-origin:50% 0;top:430.33px;font-size:8.7px;font-weight:normal;color:#e8f0f4;transform:translateX(-50%) scaleX(0.92);">03</div><div class="t" style="left:438.4px;transform-origin:50% 0;top:430.33px;font-size:8.7px;font-weight:normal;color:#e8f0f4;transform:translateX(-50%) scaleX(0.92);">01</div><div class="t" style="left:452.94px;transform-origin:50% 0;top:430.33px;font-size:8.7px;font-weight:normal;color:#e8f0f4;transform:translateX(-50%) scaleX(0.92);">00</div><div class="t" style="left:467.48px;transform-origin:50% 0;top:430.33px;font-size:8.7px;font-weight:normal;color:#e8f0f4;transform:translateX(-50%) scaleX(0.92);">01</div><div class="t" style="left:482.02px;transform-origin:50% 0;top:430.33px;font-size:8.7px;font-weight:normal;color:#e8f0f4;transform:translateX(-50%) scaleX(0.92);">00</div><div class="t" style="left:496.56px;transform-origin:50% 0;top:430.33px;font-size:8.7px;font-weight:normal;color:#e8f0f4;transform:translateX(-50%) scaleX(0.92);">02</div><div class="t" style="left:511.1px;transform-origin:50% 0;top:430.33px;font-size:8.7px;font-weight:normal;color:#e8f0f4;transform:translateX(-50%) scaleX(0.92);">03</div><div class="t" style="left:525.64px;transform-origin:50% 0;top:430.33px;font-size:8.7px;font-weight:normal;color:#e8f0f4;transform:translateX(-50%) scaleX(0.92);">02</div><div class="t" style="left:540.18px;transform-origin:50% 0;top:430.33px;font-size:8.7px;font-weight:normal;color:#e8f0f4;transform:translateX(-50%) scaleX(0.92);">03</div><div class="t" style="left:554.72px;transform-origin:50% 0;top:430.33px;font-size:8.7px;font-weight:normal;color:#e8f0f4;transform:translateX(-50%) scaleX(0.92);">01</div><div class="t" style="left:336.62px;transform-origin:50% 0;top:439.83px;font-size:8.7px;font-weight:normal;color:#e8f0f4;transform:translateX(-50%) scaleX(0.92);">03</div><div class="t" style="left:351.16px;transform-origin:50% 0;top:439.83px;font-size:8.7px;font-weight:normal;color:#e8f0f4;transform:translateX(-50%) scaleX(0.92);">02</div><div class="t" style="left:365.7px;transform-origin:50% 0;top:439.83px;font-size:8.7px;font-weight:normal;color:#e8f0f4;transform:translateX(-50%) scaleX(0.92);">03</div><div class="t" style="left:380.24px;transform-origin:50% 0;top:439.83px;font-size:8.7px;font-weight:normal;color:#e8f0f4;transform:translateX(-50%) scaleX(0.92);">02</div><div class="t" style="left:394.78px;transform-origin:50% 0;top:439.83px;font-size:8.7px;font-weight:normal;color:#e8f0f4;transform:translateX(-50%) scaleX(0.92);">00</div><div class="t" style="left:409.32px;transform-origin:50% 0;top:439.83px;font-size:8.7px;font-weight:normal;color:#e8f0f4;transform:translateX(-50%) scaleX(0.92);">02</div><div class="t" style="left:423.86px;transform-origin:50% 0;top:439.83px;font-size:8.7px;font-weight:normal;color:#e8f0f4;transform:translateX(-50%) scaleX(0.92);">00</div><div class="t" style="left:438.4px;transform-origin:50% 0;top:439.83px;font-size:8.7px;font-weight:normal;color:#e8f0f4;transform:translateX(-50%) scaleX(0.92);">02</div><div class="t" style="left:452.94px;transform-origin:50% 0;top:439.83px;font-size:8.7px;font-weight:normal;color:#e8f0f4;transform:translateX(-50%) scaleX(0.92);">03</div><div class="t" style="left:467.48px;transform-origin:50% 0;top:439.83px;font-size:8.7px;font-weight:normal;color:#e8f0f4;transform:translateX(-50%) scaleX(0.92);">02</div><div class="t" style="left:482.02px;transform-origin:50% 0;top:439.83px;font-size:8.7px;font-weight:normal;color:#e8f0f4;transform:translateX(-50%) scaleX(0.92);">02</div><div class="t" style="left:496.56px;transform-origin:50% 0;top:439.83px;font-size:8.7px;font-weight:normal;color:#e8f0f4;transform:translateX(-50%) scaleX(0.92);">03</div><div class="t" style="left:511.1px;transform-origin:50% 0;top:439.83px;font-size:8.7px;font-weight:normal;color:#e8f0f4;transform:translateX(-50%) scaleX(0.92);">02</div><div class="t" style="left:525.64px;transform-origin:50% 0;top:439.83px;font-size:8.7px;font-weight:normal;color:#e8f0f4;transform:translateX(-50%) scaleX(0.92);">00</div><div class="t" style="left:540.18px;transform-origin:50% 0;top:439.83px;font-size:8.7px;font-weight:normal;color:#e8f0f4;transform:translateX(-50%) scaleX(0.92);">02</div><div class="t" style="left:554.72px;transform-origin:50% 0;top:439.83px;font-size:8.7px;font-weight:normal;color:#e8f0f4;transform:translateX(-50%) scaleX(0.92);">00</div><div class="t" style="left:336.62px;transform-origin:50% 0;top:449.33px;font-size:8.7px;font-weight:normal;color:#e8f0f4;transform:translateX(-50%) scaleX(0.92);">01</div><div class="t" style="left:351.16px;transform-origin:50% 0;top:449.33px;font-size:8.7px;font-weight:normal;color:#e8f0f4;transform:translateX(-50%) scaleX(0.92);">00</div><div class="t" style="left:365.7px;transform-origin:50% 0;top:449.33px;font-size:8.7px;font-weight:normal;color:#e8f0f4;transform:translateX(-50%) scaleX(0.92);">01</div><div class="t" style="left:380.24px;transform-origin:50% 0;top:449.33px;font-size:8.7px;font-weight:normal;color:#e8f0f4;transform:translateX(-50%) scaleX(0.92);">00</div><div class="t" style="left:394.78px;transform-origin:50% 0;top:449.33px;font-size:8.7px;font-weight:normal;color:#e8f0f4;transform:translateX(-50%) scaleX(0.92);">02</div><div class="t" style="left:409.32px;transform-origin:50% 0;top:449.33px;font-size:8.7px;font-weight:normal;color:#e8f0f4;transform:translateX(-50%) scaleX(0.92);">03</div><div class="t" style="left:423.86px;transform-origin:50% 0;top:449.33px;font-size:8.7px;font-weight:normal;color:#e8f0f4;transform:translateX(-50%) scaleX(0.92);">02</div><div class="t" style="left:438.4px;transform-origin:50% 0;top:449.33px;font-size:8.7px;font-weight:normal;color:#e8f0f4;transform:translateX(-50%) scaleX(0.92);">00</div><div class="t" style="left:452.94px;transform-origin:50% 0;top:449.33px;font-size:8.7px;font-weight:normal;color:#e8f0f4;transform:translateX(-50%) scaleX(0.92);">01</div><div class="t" style="left:467.48px;transform-origin:50% 0;top:449.33px;font-size:8.7px;font-weight:normal;color:#e8f0f4;transform:translateX(-50%) scaleX(0.92);">00</div><div class="t" style="left:482.02px;transform-origin:50% 0;top:449.33px;font-size:8.7px;font-weight:normal;color:#e8f0f4;transform:translateX(-50%) scaleX(0.92);">01</div><div class="t" style="left:496.56px;transform-origin:50% 0;top:449.33px;font-size:8.7px;font-weight:normal;color:#e8f0f4;transform:translateX(-50%) scaleX(0.92);">00</div><div class="t" style="left:511.1px;transform-origin:50% 0;top:449.33px;font-size:8.7px;font-weight:normal;color:#e8f0f4;transform:translateX(-50%) scaleX(0.92);">01</div><div class="t" style="left:525.64px;transform-origin:50% 0;top:449.33px;font-size:8.7px;font-weight:normal;color:#e8f0f4;transform:translateX(-50%) scaleX(0.92);">03</div><div class="t" style="left:540.18px;transform-origin:50% 0;top:449.33px;font-size:8.7px;font-weight:normal;color:#e8f0f4;transform:translateX(-50%) scaleX(0.92);">01</div><div class="t" style="left:554.72px;transform-origin:50% 0;top:449.33px;font-size:8.7px;font-weight:normal;color:#e8f0f4;transform:translateX(-50%) scaleX(0.92);">03</div><div class="t" style="left:336.62px;transform-origin:50% 0;top:458.83px;font-size:8.7px;font-weight:normal;color:#e8f0f4;transform:translateX(-50%) scaleX(0.92);">01</div><div class="t" style="left:351.16px;transform-origin:50% 0;top:458.83px;font-size:8.7px;font-weight:normal;color:#e8f0f4;transform:translateX(-50%) scaleX(0.92);">03</div><div class="t" style="left:365.7px;transform-origin:50% 0;top:458.83px;font-size:8.7px;font-weight:normal;color:#e8f0f4;transform:translateX(-50%) scaleX(0.92);">02</div><div class="t" style="left:380.24px;transform-origin:50% 0;top:458.83px;font-size:8.7px;font-weight:normal;color:#e8f0f4;transform:translateX(-50%) scaleX(0.92);">00</div><div class="t" style="left:394.78px;transform-origin:50% 0;top:458.83px;font-size:8.7px;font-weight:normal;color:#e8f0f4;transform:translateX(-50%) scaleX(0.92);">01</div><div class="t" style="left:409.32px;transform-origin:50% 0;top:458.83px;font-size:8.7px;font-weight:normal;color:#e8f0f4;transform:translateX(-50%) scaleX(0.92);">03</div><div class="t" style="left:423.86px;transform-origin:50% 0;top:458.83px;font-size:8.7px;font-weight:normal;color:#e8f0f4;transform:translateX(-50%) scaleX(0.92);">02</div><div class="t" style="left:438.4px;transform-origin:50% 0;top:458.83px;font-size:8.7px;font-weight:normal;color:#e8f0f4;transform:translateX(-50%) scaleX(0.92);">03</div><div class="t" style="left:452.94px;transform-origin:50% 0;top:458.83px;font-size:8.7px;font-weight:normal;color:#e8f0f4;transform:translateX(-50%) scaleX(0.92);">01</div><div class="t" style="left:467.48px;transform-origin:50% 0;top:458.83px;font-size:8.7px;font-weight:normal;color:#e8f0f4;transform:translateX(-50%) scaleX(0.92);">00</div><div class="t" style="left:482.02px;transform-origin:50% 0;top:458.83px;font-size:8.7px;font-weight:normal;color:#e8f0f4;transform:translateX(-50%) scaleX(0.92);">01</div><div class="t" style="left:496.56px;transform-origin:50% 0;top:458.83px;font-size:8.7px;font-weight:normal;color:#e8f0f4;transform:translateX(-50%) scaleX(0.92);">00</div><div class="t" style="left:511.1px;transform-origin:50% 0;top:458.83px;font-size:8.7px;font-weight:normal;color:#e8f0f4;transform:translateX(-50%) scaleX(0.92);">01</div><div class="t" style="left:525.64px;transform-origin:50% 0;top:458.83px;font-size:8.7px;font-weight:normal;color:#e8f0f4;transform:translateX(-50%) scaleX(0.92);">00</div><div class="t" style="left:540.18px;transform-origin:50% 0;top:458.83px;font-size:8.7px;font-weight:normal;color:#e8f0f4;transform:translateX(-50%) scaleX(0.92);">01</div><div class="t" style="left:554.72px;transform-origin:50% 0;top:458.83px;font-size:8.7px;font-weight:normal;color:#e8f0f4;transform:translateX(-50%) scaleX(0.92);">03</div><div class="t" style="left:336.62px;transform-origin:50% 0;top:468.33px;font-size:8.7px;font-weight:normal;color:#e8f0f4;transform:translateX(-50%) scaleX(0.92);">01</div><div class="t" style="left:351.16px;transform-origin:50% 0;top:468.33px;font-size:8.7px;font-weight:normal;color:#e8f0f4;transform:translateX(-50%) scaleX(0.92);">03</div><div class="t" style="left:365.7px;transform-origin:50% 0;top:468.33px;font-size:8.7px;font-weight:normal;color:#e8f0f4;transform:translateX(-50%) scaleX(0.92);">01</div><div class="t" style="left:380.24px;transform-origin:50% 0;top:468.33px;font-size:8.7px;font-weight:normal;color:#e8f0f4;transform:translateX(-50%) scaleX(0.92);">00</div><div class="t" style="left:394.78px;transform-origin:50% 0;top:468.33px;font-size:8.7px;font-weight:normal;color:#e8f0f4;transform:translateX(-50%) scaleX(0.92);">01</div><div class="t" style="left:409.32px;transform-origin:50% 0;top:468.33px;font-size:8.7px;font-weight:normal;color:#e8f0f4;transform:translateX(-50%) scaleX(0.92);">03</div><div class="t" style="left:423.86px;transform-origin:50% 0;top:468.33px;font-size:8.7px;font-weight:normal;color:#e8f0f4;transform:translateX(-50%) scaleX(0.92);">01</div><div class="t" style="left:438.4px;transform-origin:50% 0;top:468.33px;font-size:8.7px;font-weight:normal;color:#e8f0f4;transform:translateX(-50%) scaleX(0.92);">03</div><div class="t" style="left:452.94px;transform-origin:50% 0;top:468.33px;font-size:8.7px;font-weight:normal;color:#e8f0f4;transform:translateX(-50%) scaleX(0.92);">01</div><div class="t" style="left:467.48px;transform-origin:50% 0;top:468.33px;font-size:8.7px;font-weight:normal;color:#e8f0f4;transform:translateX(-50%) scaleX(0.92);">00</div><div class="t" style="left:482.02px;transform-origin:50% 0;top:468.33px;font-size:8.7px;font-weight:normal;color:#e8f0f4;transform:translateX(-50%) scaleX(0.92);">02</div><div class="t" style="left:496.56px;transform-origin:50% 0;top:468.33px;font-size:8.7px;font-weight:normal;color:#e8f0f4;transform:translateX(-50%) scaleX(0.92);">00</div><div class="t" style="left:511.1px;transform-origin:50% 0;top:468.33px;font-size:8.7px;font-weight:normal;color:#e8f0f4;transform:translateX(-50%) scaleX(0.92);">01</div><div class="t" style="left:525.64px;transform-origin:50% 0;top:468.33px;font-size:8.7px;font-weight:normal;color:#e8f0f4;transform:translateX(-50%) scaleX(0.92);">00</div><div class="t" style="left:540.18px;transform-origin:50% 0;top:468.33px;font-size:8.7px;font-weight:normal;color:#e8f0f4;transform:translateX(-50%) scaleX(0.92);">01</div><div class="t" style="left:554.72px;transform-origin:50% 0;top:468.33px;font-size:8.7px;font-weight:normal;color:#e8f0f4;transform:translateX(-50%) scaleX(0.92);">03</div><div class="t" style="left:336.62px;transform-origin:50% 0;top:477.83px;font-size:8.7px;font-weight:normal;color:#e8f0f4;transform:translateX(-50%) scaleX(0.92);">01</div><div class="t" style="left:351.16px;transform-origin:50% 0;top:477.83px;font-size:8.7px;font-weight:normal;color:#e8f0f4;transform:translateX(-50%) scaleX(0.92);">00</div><div class="t" style="left:365.7px;transform-origin:50% 0;top:477.83px;font-size:8.7px;font-weight:normal;color:#e8f0f4;transform:translateX(-50%) scaleX(0.92);">02</div><div class="t" style="left:380.24px;transform-origin:50% 0;top:477.83px;font-size:8.7px;font-weight:normal;color:#e8f0f4;transform:translateX(-50%) scaleX(0.92);">00</div><div class="t" style="left:394.78px;transform-origin:50% 0;top:477.83px;font-size:8.7px;font-weight:normal;color:#e8f0f4;transform:translateX(-50%) scaleX(0.92);">02</div><div class="t" style="left:409.32px;transform-origin:50% 0;top:477.83px;font-size:8.7px;font-weight:normal;color:#e8f0f4;transform:translateX(-50%) scaleX(0.92);">00</div><div class="t" style="left:423.86px;transform-origin:50% 0;top:477.83px;font-size:8.7px;font-weight:normal;color:#e8f0f4;transform:translateX(-50%) scaleX(0.92);">02</div><div class="t" style="left:438.4px;transform-origin:50% 0;top:477.83px;font-size:8.7px;font-weight:normal;color:#e8f0f4;transform:translateX(-50%) scaleX(0.92);">03</div><div class="t" style="left:452.94px;transform-origin:50% 0;top:477.83px;font-size:8.7px;font-weight:normal;color:#e8f0f4;transform:translateX(-50%) scaleX(0.92);">01</div><div class="t" style="left:467.48px;transform-origin:50% 0;top:477.83px;font-size:8.7px;font-weight:normal;color:#e8f0f4;transform:translateX(-50%) scaleX(0.92);">00</div><div class="t" style="left:482.02px;transform-origin:50% 0;top:477.83px;font-size:8.7px;font-weight:normal;color:#e8f0f4;transform:translateX(-50%) scaleX(0.92);">1D</div><div class="t" style="left:496.56px;transform-origin:50% 0;top:477.83px;font-size:8.7px;font-weight:normal;color:#e8f0f4;transform:translateX(-50%) scaleX(0.92);">11</div><div class="t" style="left:511.1px;transform-origin:50% 0;top:477.83px;font-size:8.7px;font-weight:normal;color:#e8f0f4;transform:translateX(-50%) scaleX(0.92);">12</div><div class="t" style="left:525.64px;transform-origin:50% 0;top:477.83px;font-size:8.7px;font-weight:normal;color:#e8f0f4;transform:translateX(-50%) scaleX(0.92);">10</div><div class="t" style="left:540.18px;transform-origin:50% 0;top:477.83px;font-size:8.7px;font-weight:normal;color:#e8f0f4;transform:translateX(-50%) scaleX(0.92);">04</div><div class="t" style="left:554.72px;transform-origin:50% 0;top:477.83px;font-size:8.7px;font-weight:normal;color:#e8f0f4;transform:translateX(-50%) scaleX(0.92);">..</div><div class="r" style="left:570.7px;top:418px;width:7px;height:70px;background:#37474f;"></div><div class="r" style="left:571.2px;top:425px;width:6px;height:7px;background:#6a8ea4;"></div><svg class="r" style="left:571px;top:419.5px" width="7" height="5"><path d="M1 4 L6 4 L3.5 1 Z" fill="#f0f0f0"/></svg><svg class="r" style="left:571px;top:482px" width="7" height="5"><path d="M1 1 L6 1 L3.5 4 Z" fill="#f0f0f0"/></svg><div class="r" style="left:22px;top:490px;width:557.5px;height:1px;background:#1c2428;"></div><div class="r" style="left:283.4px;top:291.7px;width:34.5px;height:8.3px;background:rgba(120,120,120,0.45);border-radius:1px"></div><div class="r" style="left:288.4px;top:295.7px;width:1.2px;height:1px;background:#aaaaaa;"></div><div class="r" style="left:291.4px;top:295.7px;width:1.2px;height:1px;background:#aaaaaa;"></div><div class="r" style="left:294.4px;top:295.7px;width:1.2px;height:1px;background:#aaaaaa;"></div><div class="r" style="left:297.4px;top:295.7px;width:1.2px;height:1px;background:#aaaaaa;"></div><div class="r" style="left:300.4px;top:295.7px;width:1.2px;height:1px;background:#aaaaaa;"></div><div class="r" style="left:303.4px;top:295.7px;width:1.2px;height:1px;background:#aaaaaa;"></div><div class="r" style="left:306.4px;top:295.7px;width:1.2px;height:1px;background:#aaaaaa;"></div><div class="r" style="left:309.4px;top:295.7px;width:1.2px;height:1px;background:#aaaaaa;"></div><div class="r" style="left:312.4px;top:295.7px;width:1.2px;height:1px;background:#aaaaaa;"></div><div class="r" style="left:283.3px;top:401.3px;width:34.5px;height:8.3px;background:rgba(120,120,120,0.45);border-radius:1px"></div><div class="r" style="left:288.3px;top:405.3px;width:1.2px;height:1px;background:#aaaaaa;"></div><div class="r" style="left:291.3px;top:405.3px;width:1.2px;height:1px;background:#aaaaaa;"></div><div class="r" style="left:294.3px;top:405.3px;width:1.2px;height:1px;background:#aaaaaa;"></div><div class="r" style="left:297.3px;top:405.3px;width:1.2px;height:1px;background:#aaaaaa;"></div><div class="r" style="left:300.3px;top:405.3px;width:1.2px;height:1px;background:#aaaaaa;"></div><div class="r" style="left:303.3px;top:405.3px;width:1.2px;height:1px;background:#aaaaaa;"></div><div class="r" style="left:306.3px;top:405.3px;width:1.2px;height:1px;background:#aaaaaa;"></div><div class="r" style="left:309.3px;top:405.3px;width:1.2px;height:1px;background:#aaaaaa;"></div><div class="r" style="left:312.3px;top:405.3px;width:1.2px;height:1px;background:#aaaaaa;"></div><div class="r" style="left:297.3px;top:212px;width:7.5px;height:34px;background:rgba(120,120,120,0.4);border-radius:1px"></div><div class="r" style="left:300.8px;top:217px;width:1px;height:1.2px;background:#6c6c6c;"></div><div class="r" style="left:300.8px;top:220px;width:1px;height:1.2px;background:#6c6c6c;"></div><div class="r" style="left:300.8px;top:223px;width:1px;height:1.2px;background:#6c6c6c;"></div><div class="r" style="left:300.8px;top:226px;width:1px;height:1.2px;background:#6c6c6c;"></div><div class="r" style="left:300.8px;top:229px;width:1px;height:1.2px;background:#6c6c6c;"></div><div class="r" style="left:300.8px;top:232px;width:1px;height:1.2px;background:#6c6c6c;"></div><div class="r" style="left:300.8px;top:235px;width:1px;height:1.2px;background:#6c6c6c;"></div><div class="r" style="left:300.8px;top:238px;width:1px;height:1.2px;background:#6c6c6c;"></div><div class="r" style="left:300.8px;top:241px;width:1px;height:1.2px;background:#6c6c6c;"></div><div class="r" style="left:297.5px;top:431.5px;width:7.5px;height:34.5px;background:rgba(120,120,120,0.4);border-radius:1px"></div><div class="r" style="left:301.0px;top:436.5px;width:1px;height:1.2px;background:#6c6c6c;"></div><div class="r" style="left:301.0px;top:439.5px;width:1px;height:1.2px;background:#6c6c6c;"></div><div class="r" style="left:301.0px;top:442.5px;width:1px;height:1.2px;background:#6c6c6c;"></div><div class="r" style="left:301.0px;top:445.5px;width:1px;height:1.2px;background:#6c6c6c;"></div><div class="r" style="left:301.0px;top:448.5px;width:1px;height:1.2px;background:#6c6c6c;"></div><div class="r" style="left:301.0px;top:451.5px;width:1px;height:1.2px;background:#6c6c6c;"></div><div class="r" style="left:301.0px;top:454.5px;width:1px;height:1.2px;background:#6c6c6c;"></div><div class="r" style="left:301.0px;top:457.5px;width:1px;height:1.2px;background:#6c6c6c;"></div><div class="r" style="left:301.0px;top:460.5px;width:1px;height:1.2px;background:#6c6c6c;"></div>
</body></html>
